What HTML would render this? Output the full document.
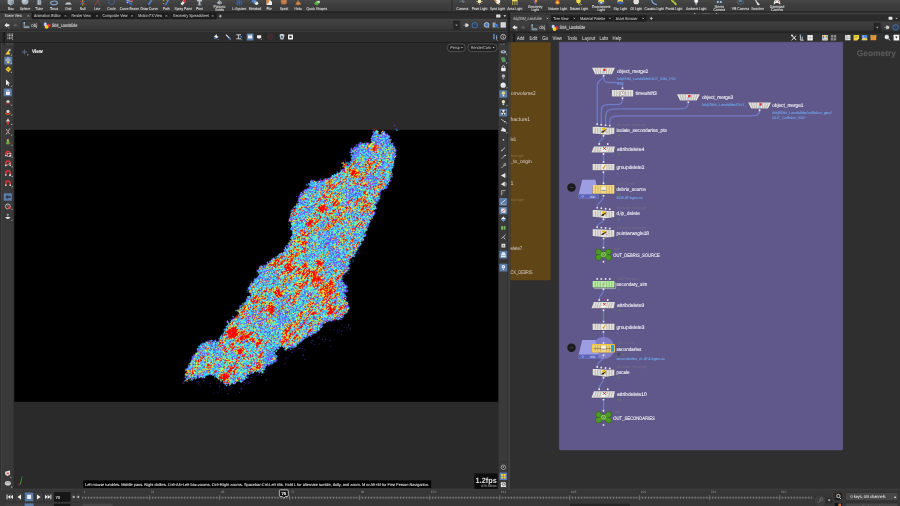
<!DOCTYPE html>
<html lang="en">
<head>
<meta charset="utf-8">
<title>Houdini - SIM_Landslide</title>
<style>
html,body{margin:0;padding:0;background:#2f2f2f;width:900px;height:506px;overflow:hidden}
svg{display:block;will-change:transform;font-family:"Liberation Sans",sans-serif;text-rendering:geometricPrecision}
text{white-space:pre}
</style>
</head>
<body>
<svg width="900" height="506" viewBox="0 0 900 506">
<defs><filter id="soft" x="0" y="0" width="900" height="506" filterUnits="userSpaceOnUse"><feGaussianBlur stdDeviation="0.32"/></filter></defs>
<defs>
<linearGradient id="gShelf" x1="0" y1="0" x2="0" y2="1"><stop offset="0" stop-color="#474747"/><stop offset="0.45" stop-color="#3d3d3d"/><stop offset="1" stop-color="#393939"/></linearGradient>
<linearGradient id="gPath" x1="0" y1="0" x2="0" y2="1"><stop offset="0" stop-color="#4a4a4a"/><stop offset="0.08" stop-color="#424242"/><stop offset="0.8" stop-color="#383838"/><stop offset="0.9" stop-color="#2f2f2f"/><stop offset="1" stop-color="#2e2e2e"/></linearGradient>
<linearGradient id="gPathR" x1="0" y1="0" x2="0" y2="1"><stop offset="0" stop-color="#414141"/><stop offset="0.75" stop-color="#373737"/><stop offset="0.9" stop-color="#303030"/><stop offset="1" stop-color="#2c2c2c"/></linearGradient>
</defs>
<g id="panels">
<rect x="0.00" y="0.00" width="900.00" height="506.00" fill="#2f2f2f"/>
<rect x="0.00" y="0.00" width="900.00" height="11.60" fill="url(#gShelf)"/>
<rect x="0.00" y="11.50" width="900.00" height="1.20" fill="#1e1e1e"/>
<rect x="451.60" y="0.00" width="1.20" height="11.40" fill="#2a2a2a"/>
<rect x="452.80" y="0.00" width="0.60" height="11.40" fill="#4a4a4a"/>
<rect x="0.00" y="12.70" width="508.00" height="6.20" fill="#2c2c2c"/>
<rect x="0.00" y="12.90" width="31.40" height="6.00" fill="#3b3b3b"/>
<rect x="0.00" y="18.80" width="508.00" height="12.60" fill="url(#gPath)"/>
<rect x="0.00" y="31.30" width="508.00" height="0.60" fill="#484848"/>
<rect x="0.00" y="31.90" width="508.00" height="10.20" fill="#2d2d2d"/>
<rect x="0.00" y="42.10" width="508.00" height="0.80" fill="#1c1c1c"/>
<rect x="0.00" y="42.90" width="508.00" height="445.90" fill="#2a2a2a"/>
<rect x="14.40" y="129.90" width="484.00" height="271.90" fill="#000000"/>
<rect x="0.00" y="42.90" width="0.90" height="446.00" fill="#2d2d2d"/>
<rect x="0.90" y="42.90" width="1.00" height="446.00" fill="#474747"/>
<rect x="1.90" y="42.90" width="11.70" height="446.00" fill="#393939"/>
<rect x="498.60" y="42.90" width="8.70" height="446.00" fill="#3a3a3a"/>
<rect x="507.30" y="12.60" width="1.00" height="476.50" fill="#343434"/>
<rect x="508.30" y="12.60" width="1.60" height="476.50" fill="#474747"/>
<rect x="507.60" y="12.60" width="2.60" height="29.60" fill="#222222"/>
<rect x="510.20" y="12.40" width="389.80" height="2.30" fill="#3c3c3c"/>
<rect x="510.20" y="14.60" width="389.80" height="6.90" fill="#2b2b2b"/>
<rect x="510.40" y="14.80" width="40.30" height="6.70" fill="#3b3b3b"/>
<rect x="510.20" y="21.50" width="389.80" height="10.30" fill="url(#gPathR)"/>
<rect x="510.20" y="31.70" width="389.80" height="1.50" fill="#242424"/>
<rect x="510.20" y="33.20" width="389.80" height="9.00" fill="#303030"/>
<rect x="509.90" y="42.20" width="390.10" height="446.60" fill="#2f2f2f"/>
<path d="M693.8 13.0 H695.6 L694.7 14.0 Z" fill="#cfcfcf"/>
<path d="M715.6 13.0 H717.4 L716.5 14.0 Z" fill="#cfcfcf"/>
<rect x="702.20" y="13.00" width="7.80" height="1.00" fill="#555555"/>
<rect x="0.00" y="488.80" width="900.00" height="0.80" fill="#4a4a4a"/>
<rect x="0.00" y="489.60" width="900.00" height="16.40" fill="#373737"/>
</g>
<defs>
<filter id="pcloud" x="-10%" y="-25%" width="120%" height="150%" color-interpolation-filters="sRGB">
 <feTurbulence type="fractalNoise" baseFrequency="0.12 0.42" numOctaves="2" seed="7" result="n1"/>
 <feColorMatrix in="n1" type="matrix" values="1 0 0 0 0  1 0 0 0 0  1 0 0 0 0  0 0 0 0 1" result="g1"/>
 <feTurbulence type="fractalNoise" baseFrequency="0.03 0.06" numOctaves="2" seed="3" result="n2"/>
 <feColorMatrix in="n2" type="matrix" values="0 1 0 0 0  0 1 0 0 0  0 1 0 0 0  0 0 0 0 1" result="g2"/>
 <feTurbulence type="fractalNoise" baseFrequency="0.71 0.83" numOctaves="2" seed="23" result="n3"/>
 <feColorMatrix in="n3" type="matrix" values="0 0 1 0 0  0 0 1 0 0  0 0 1 0 0  0 0 0 0 1" result="g3"/>
 <feGaussianBlur in="SourceGraphic" stdDeviation="2.2" result="hand"/>
 <feComposite in="g1" in2="g2" operator="arithmetic" k1="0" k2="1" k3="0.7" k4="-0.35" result="pa"/>
 <feComposite in="pa" in2="hand" operator="arithmetic" k1="0" k2="1" k3="0.45" k4="-0.225" result="pre"/>
 <feComponentTransfer in="pre" result="s1">
  <feFuncR type="table" tableValues="0 0 0 0 0 0 0 0 0 0.02 0.10 0.28 0.5 0.7 0.85 0.95 1 1 1 1 1"/>
  <feFuncG type="table" tableValues="0 0 0 0 0 0 0 0 0 0.02 0.10 0.28 0.5 0.7 0.85 0.95 1 1 1 1 1"/>
  <feFuncB type="table" tableValues="0 0 0 0 0 0 0 0 0 0.02 0.10 0.28 0.5 0.7 0.85 0.95 1 1 1 1 1"/>
 </feComponentTransfer>
 <feComposite in="g3" in2="hand" operator="arithmetic" k1="0" k2="1.0" k3="0.3" k4="-0.15" result="t"/>
 <feComposite in="s1" in2="t" operator="arithmetic" k1="0" k2="0.62" k3="2.0" k4="-0.70" result="mix"/>
 <feComponentTransfer in="mix" result="col">
  <feFuncR type="table" tableValues="0.52 0.42 0.28 0.22 0.20 0.26 0.23 0.30 0.45 0.78 1.00 1.00 1.00 1.00 1.00 1.00"/>
  <feFuncG type="table" tableValues="0.22 0.30 0.44 0.64 0.84 0.93 0.74 0.92 0.99 1.00 0.88 0.55 0.22 0.03 0.00 0.00"/>
  <feFuncB type="table" tableValues="0.97 1.00 1.00 1.00 1.00 0.93 1.00 0.90 0.65 0.30 0.12 0.04 0.00 0.00 0.00 0.00"/>
 </feComponentTransfer>
 <feTurbulence type="fractalNoise" baseFrequency="0.4" numOctaves="2" seed="11" result="dn"/>
 <feDisplacementMap in="SourceAlpha" in2="dn" scale="6.5" xChannelSelector="R" yChannelSelector="G" result="rough"/>
 <feComposite in="col" in2="rough" operator="in"/>
</filter>
</defs>
<g id="pointcloud">
<g filter="url(#pcloud)" transform="rotate(-50 290 258)">
<g transform="rotate(50 290 258)">
<path d="M374.8 129.8 L377.5 131.8 L379.6 133.4 L382.7 131.2 L385.5 131.6 L388.3 133.2 L389.0 137.4 L390.6 142.1 L394.6 146.1 L396.2 151.6 L394.6 159.5 L393.0 167.4 L391.4 175.3 L389.0 183.2 L384.3 191.1 L381.4 190.0 L379.1 197.9 L375.9 205.8 L375.1 213.7 L371.1 221.6 L366.4 229.5 L364.0 239.0 L358.5 248.5 L353.8 256.4 L349.8 262.7 L349.8 268.0 L348.5 270.0 L342.2 277.9 L340.6 284.2 L343.8 290.6 L346.2 298.5 L349.3 306.4 L346.2 312.7 L342.2 319.0 L334.3 320.6 L328.0 321.4 L323.2 324.5 L320.1 330.1 L315.3 333.2 L310.6 335.6 L305.8 338.0 L301.1 341.9 L296.4 345.9 L291.6 349.1 L290.0 346.9 L287.0 351.6 L283.8 346.9 L277.5 348.5 L274.3 354.0 L271.2 359.5 L268.0 364.3 L264.9 369.0 L261.7 373.8 L258.5 370.6 L253.8 372.2 L249.0 373.8 L245.9 378.5 L241.9 382.5 L239.6 380.9 L234.8 383.2 L229.3 385.1 L224.5 384.0 L220.6 380.9 L215.8 377.7 L211.1 374.5 L203.2 377.7 L195.3 377.7 L187.4 380.9 L182.6 383.4 L185.8 376.9 L185.8 370.6 L189.0 363.5 L192.1 357.2 L196.9 350.8 L200.0 344.5 L207.9 340.6 L214.3 341.3 L219.8 339.0 L223.8 332.6 L225.3 326.3 L228.5 321.9 L233.2 318.0 L239.6 313.2 L237.5 311.0 L240.4 306.9 L244.3 302.2 L249.0 295.8 L247.5 287.9 L252.2 281.6 L260.1 273.7 L264.9 265.8 L271.2 259.5 L277.4 255.9 L284.5 249.6 L286.9 244.8 L290.9 240.1 L292.5 233.8 L290.1 225.8 L289.3 217.9 L292.5 210.8 L296.4 203.7 L298.0 197.4 L301.1 191.9 L307.5 188.7 L315.4 184.7 L320.9 180.0 L325.8 179.3 L332.1 176.1 L338.5 171.4 L344.8 166.6 L349.5 162.7 L351.9 156.4 L353.5 149.2 L357.4 144.5 L362.2 142.9 L368.5 143.7 L371.7 139.0 L373.2 132.6 Z" fill="#808080"/>
<circle cx="352.50" cy="172.50" r="4.00" fill="#f0f0f0"/>
<circle cx="336.00" cy="203.00" r="4.00" fill="#f0f0f0"/>
<circle cx="341.00" cy="196.00" r="3.00" fill="#f0f0f0"/>
<circle cx="322.00" cy="208.50" r="4.00" fill="#f0f0f0"/>
<circle cx="311.00" cy="222.00" r="4.00" fill="#f0f0f0"/>
<circle cx="300.00" cy="239.00" r="3.50" fill="#f0f0f0"/>
<circle cx="304.00" cy="233.00" r="3.00" fill="#f0f0f0"/>
<circle cx="289.00" cy="269.00" r="4.00" fill="#f0f0f0"/>
<circle cx="305.50" cy="272.00" r="6.00" fill="#f0f0f0"/>
<circle cx="316.50" cy="280.00" r="4.00" fill="#f0f0f0"/>
<circle cx="278.00" cy="291.50" r="4.50" fill="#f0f0f0"/>
<circle cx="294.50" cy="300.00" r="5.00" fill="#f0f0f0"/>
<circle cx="330.00" cy="311.00" r="3.50" fill="#f0f0f0"/>
<circle cx="233.60" cy="333.00" r="6.00" fill="#f0f0f0"/>
<circle cx="247.40" cy="335.70" r="5.50" fill="#f0f0f0"/>
<circle cx="261.00" cy="341.00" r="4.00" fill="#f0f0f0"/>
<circle cx="225.00" cy="378.00" r="5.00" fill="#f0f0f0"/>
<circle cx="232.00" cy="371.00" r="3.50" fill="#f0f0f0"/>
<circle cx="289.00" cy="327.00" r="3.50" fill="#f0f0f0"/>
<circle cx="269.50" cy="308.00" r="4.00" fill="#f0f0f0"/>
<circle cx="253.00" cy="286.00" r="3.00" fill="#f0f0f0"/>
<circle cx="345.00" cy="165.00" r="3.00" fill="#f0f0f0"/>
<circle cx="330.00" cy="182.00" r="3.50" fill="#f0f0f0"/>
<circle cx="318.00" cy="262.00" r="4.00" fill="#f0f0f0"/>
<circle cx="240.00" cy="352.00" r="3.00" fill="#f0f0f0"/>
<circle cx="330.00" cy="239.00" r="8.50" fill="#444444"/>
<circle cx="337.00" cy="258.00" r="6.50" fill="#444444"/>
<circle cx="352.00" cy="192.00" r="6.50" fill="#444444"/>
<circle cx="314.00" cy="186.00" r="6.50" fill="#444444"/>
<circle cx="303.00" cy="200.00" r="5.50" fill="#444444"/>
<circle cx="270.00" cy="358.00" r="6.50" fill="#444444"/>
<circle cx="341.00" cy="288.00" r="6.50" fill="#444444"/>
<circle cx="356.00" cy="152.00" r="5.50" fill="#444444"/>
<circle cx="383.00" cy="160.00" r="5.50" fill="#444444"/>
<circle cx="372.00" cy="180.00" r="5.50" fill="#444444"/>
<circle cx="320.00" cy="300.00" r="5.50" fill="#444444"/>
<circle cx="282.00" cy="318.00" r="4.50" fill="#444444"/>
<circle cx="215.00" cy="350.00" r="5.50" fill="#444444"/>
<circle cx="262.00" cy="270.00" r="4.50" fill="#444444"/>
<circle cx="385.00" cy="140.00" r="5.50" fill="#444444"/>
<circle cx="376.00" cy="140.00" r="4.50" fill="#444444"/>
<circle cx="368.00" cy="152.00" r="4.50" fill="#444444"/>
</g></g>
<rect x="396.40" y="129.70" width="1.20" height="1.20" fill="#30c8f0"/>
<rect x="395.60" y="128.60" width="1.20" height="1.20" fill="#4060ff"/>
<rect x="394.00" y="124.90" width="1.20" height="1.20" fill="#7030d0"/>
<rect x="392.90" y="158.40" width="1.20" height="1.20" fill="#6a30d0"/>
<rect x="235.40" y="310.00" width="1.20" height="1.20" fill="#30c0f0"/>
<rect x="291.93" y="351.63" width="0.90" height="0.90" fill="#6a22d0" opacity="0.94"/>
<rect x="341.14" y="334.05" width="0.90" height="0.90" fill="#7a28c8" opacity="0.52"/>
<rect x="309.94" y="341.82" width="0.90" height="0.90" fill="#6a22d0" opacity="0.70"/>
<rect x="267.71" y="365.81" width="0.90" height="0.90" fill="#7a28c8" opacity="0.92"/>
<rect x="341.28" y="330.95" width="0.90" height="0.90" fill="#6a22d0" opacity="0.70"/>
<rect x="213.43" y="392.53" width="0.90" height="0.90" fill="#7a28c8" opacity="0.46"/>
<rect x="268.24" y="364.98" width="0.90" height="0.90" fill="#4a40e0" opacity="0.95"/>
<rect x="284.39" y="362.97" width="0.90" height="0.90" fill="#5a30d8" opacity="0.91"/>
<rect x="198.02" y="380.37" width="0.90" height="0.90" fill="#4a40e0" opacity="0.52"/>
<rect x="337.12" y="330.34" width="0.90" height="0.90" fill="#4a40e0" opacity="0.77"/>
<rect x="313.92" y="344.11" width="0.90" height="0.90" fill="#6a22d0" opacity="0.74"/>
<rect x="217.37" y="391.88" width="0.90" height="0.90" fill="#7a28c8" opacity="0.65"/>
<rect x="291.09" y="351.82" width="0.90" height="0.90" fill="#6a22d0" opacity="0.71"/>
<rect x="330.20" y="329.65" width="0.90" height="0.90" fill="#6a22d0" opacity="0.56"/>
<rect x="228.26" y="388.48" width="0.90" height="0.90" fill="#5a30d8" opacity="0.59"/>
<rect x="330.35" y="345.96" width="0.90" height="0.90" fill="#6a22d0" opacity="0.52"/>
<rect x="240.55" y="388.13" width="0.90" height="0.90" fill="#6a22d0" opacity="0.73"/>
<rect x="300.39" y="347.58" width="0.90" height="0.90" fill="#4a40e0" opacity="0.94"/>
<rect x="227.54" y="393.24" width="0.90" height="0.90" fill="#4a40e0" opacity="0.88"/>
<rect x="344.85" y="324.66" width="0.90" height="0.90" fill="#5a30d8" opacity="0.50"/>
<rect x="333.64" y="329.21" width="0.90" height="0.90" fill="#7a28c8" opacity="0.51"/>
<rect x="221.56" y="389.02" width="0.90" height="0.90" fill="#6a22d0" opacity="0.45"/>
<rect x="218.44" y="387.70" width="0.90" height="0.90" fill="#5a30d8" opacity="0.63"/>
<rect x="288.88" y="354.87" width="0.90" height="0.90" fill="#6a22d0" opacity="0.46"/>
<rect x="196.52" y="381.48" width="0.90" height="0.90" fill="#4a40e0" opacity="0.93"/>
<rect x="243.73" y="383.93" width="0.90" height="0.90" fill="#6a22d0" opacity="0.48"/>
<rect x="322.05" y="339.06" width="0.90" height="0.90" fill="#5a30d8" opacity="0.55"/>
<rect x="270.11" y="364.37" width="0.90" height="0.90" fill="#4a40e0" opacity="0.46"/>
<rect x="304.52" y="358.79" width="0.90" height="0.90" fill="#6a22d0" opacity="0.93"/>
<rect x="199.52" y="385.35" width="0.90" height="0.90" fill="#4a40e0" opacity="0.70"/>
<rect x="311.47" y="340.34" width="0.90" height="0.90" fill="#6a22d0" opacity="0.53"/>
<rect x="317.31" y="337.43" width="0.90" height="0.90" fill="#4a40e0" opacity="0.88"/>
<rect x="252.39" y="374.73" width="0.90" height="0.90" fill="#6a22d0" opacity="0.56"/>
<rect x="203.20" y="380.68" width="0.90" height="0.90" fill="#4a40e0" opacity="0.83"/>
<rect x="223.86" y="387.83" width="0.90" height="0.90" fill="#4a40e0" opacity="0.86"/>
<rect x="312.38" y="340.29" width="0.90" height="0.90" fill="#4a40e0" opacity="0.91"/>
<rect x="339.17" y="329.61" width="0.90" height="0.90" fill="#4a40e0" opacity="0.46"/>
<rect x="250.64" y="376.99" width="0.90" height="0.90" fill="#5a30d8" opacity="0.90"/>
<rect x="276.80" y="360.31" width="0.90" height="0.90" fill="#5a30d8" opacity="0.60"/>
<rect x="311.25" y="342.64" width="0.90" height="0.90" fill="#5a30d8" opacity="0.66"/>
<rect x="318.77" y="336.72" width="0.90" height="0.90" fill="#6a22d0" opacity="0.95"/>
<rect x="341.65" y="324.36" width="0.90" height="0.90" fill="#5a30d8" opacity="0.65"/>
<rect x="210.04" y="385.98" width="0.90" height="0.90" fill="#5a30d8" opacity="0.59"/>
<rect x="337.39" y="332.38" width="0.90" height="0.90" fill="#4a40e0" opacity="0.63"/>
<rect x="248.35" y="383.05" width="0.90" height="0.90" fill="#6a22d0" opacity="0.78"/>
<rect x="244.12" y="382.26" width="0.90" height="0.90" fill="#6a22d0" opacity="0.83"/>
<rect x="244.79" y="379.49" width="0.90" height="0.90" fill="#4a40e0" opacity="0.49"/>
<rect x="218.93" y="385.30" width="0.90" height="0.90" fill="#4a40e0" opacity="0.47"/>
<rect x="302.13" y="348.39" width="0.90" height="0.90" fill="#4a40e0" opacity="0.89"/>
<rect x="203.48" y="380.42" width="0.90" height="0.90" fill="#5a30d8" opacity="0.77"/>
<rect x="347.95" y="325.61" width="0.90" height="0.90" fill="#4a40e0" opacity="0.93"/>
<rect x="232.55" y="386.80" width="0.90" height="0.90" fill="#4a40e0" opacity="0.52"/>
<rect x="287.47" y="356.72" width="0.90" height="0.90" fill="#5a30d8" opacity="0.49"/>
<rect x="260.95" y="374.92" width="0.90" height="0.90" fill="#7a28c8" opacity="0.92"/>
<rect x="204.58" y="381.88" width="0.90" height="0.90" fill="#6a22d0" opacity="0.46"/>
<rect x="272.01" y="363.41" width="0.90" height="0.90" fill="#4a40e0" opacity="0.49"/>
<rect x="325.12" y="338.82" width="0.90" height="0.90" fill="#5a30d8" opacity="0.83"/>
<rect x="342.27" y="329.87" width="0.90" height="0.90" fill="#7a28c8" opacity="0.62"/>
<rect x="293.08" y="351.09" width="0.90" height="0.90" fill="#5a30d8" opacity="0.53"/>
<rect x="262.92" y="370.67" width="0.90" height="0.90" fill="#6a22d0" opacity="0.59"/>
<rect x="218.98" y="385.95" width="0.90" height="0.90" fill="#6a22d0" opacity="0.77"/>
<rect x="265.79" y="370.40" width="0.90" height="0.90" fill="#7a28c8" opacity="0.60"/>
<rect x="349.89" y="328.38" width="0.90" height="0.90" fill="#4a40e0" opacity="0.72"/>
<rect x="265.85" y="379.33" width="0.90" height="0.90" fill="#4a40e0" opacity="0.93"/>
<rect x="271.18" y="364.00" width="0.90" height="0.90" fill="#5a30d8" opacity="0.93"/>
<rect x="240.82" y="387.52" width="0.90" height="0.90" fill="#5a30d8" opacity="0.58"/>
<rect x="258.18" y="374.19" width="0.90" height="0.90" fill="#6a22d0" opacity="0.82"/>
<rect x="348.21" y="324.13" width="0.90" height="0.90" fill="#5a30d8" opacity="0.57"/>
<rect x="343.81" y="326.83" width="0.90" height="0.90" fill="#6a22d0" opacity="0.45"/>
<rect x="248.13" y="381.54" width="0.90" height="0.90" fill="#5a30d8" opacity="0.66"/>
<rect x="209.73" y="382.93" width="0.90" height="0.90" fill="#5a30d8" opacity="0.85"/>
<rect x="329.58" y="340.10" width="0.90" height="0.90" fill="#6a22d0" opacity="0.85"/>
<rect x="251.64" y="376.77" width="0.90" height="0.90" fill="#5a30d8" opacity="0.47"/>
<rect x="302.97" y="354.47" width="0.90" height="0.90" fill="#4a40e0" opacity="0.89"/>
<rect x="298.26" y="347.76" width="0.90" height="0.90" fill="#6a22d0" opacity="0.73"/>
<rect x="304.49" y="349.22" width="0.90" height="0.90" fill="#4a40e0" opacity="0.68"/>
<rect x="239.25" y="391.88" width="0.90" height="0.90" fill="#6a22d0" opacity="0.91"/>
<rect x="302.40" y="345.61" width="0.90" height="0.90" fill="#7a28c8" opacity="0.73"/>
<rect x="241.25" y="388.66" width="0.90" height="0.90" fill="#7a28c8" opacity="0.81"/>
<rect x="285.42" y="357.77" width="0.90" height="0.90" fill="#4a40e0" opacity="0.94"/>
<rect x="197.78" y="383.68" width="0.90" height="0.90" fill="#7a28c8" opacity="0.87"/>
<rect x="299.43" y="348.06" width="0.90" height="0.90" fill="#6a22d0" opacity="0.77"/>
<rect x="267.29" y="368.89" width="0.90" height="0.90" fill="#6a22d0" opacity="0.82"/>
<rect x="318.83" y="343.56" width="0.90" height="0.90" fill="#4a40e0" opacity="0.50"/>
<rect x="249.57" y="381.71" width="0.90" height="0.90" fill="#7a28c8" opacity="0.86"/>
<rect x="323.54" y="340.77" width="0.90" height="0.90" fill="#7a28c8" opacity="0.86"/>
<rect x="249.91" y="382.13" width="0.90" height="0.90" fill="#5a30d8" opacity="0.68"/>
<rect x="302.00" y="355.01" width="0.90" height="0.90" fill="#6a22d0" opacity="0.70"/>
<rect x="346.32" y="327.50" width="0.90" height="0.90" fill="#5a30d8" opacity="0.73"/>
<rect x="277.52" y="361.40" width="0.90" height="0.90" fill="#6a22d0" opacity="0.48"/>
</g>
<g id="net" filter="url(#soft)">
<g id="netboxes">
<path d="M510.4 42.2 H550.6 V278.7 Q550.6 280.2 549.1 280.2 H510.4 Z" fill="#604419"/>
<path d="M559.3 42.2 H842.8 V448.4 Q842.8 449.9 841.3 449.9 H560.8 Q559.3 449.9 559.3 448.4 Z" fill="#60588a" stroke="#6b63a0" stroke-width="0.4"/>
</g>
<g id="brown-labels">
<text x="511.00" y="94.60" font-size="5.3" fill="#d2cbbd" stroke="#d2cbbd" stroke-width="0.03" textLength="24.60" lengthAdjust="spacingAndGlyphs">omvolume2</text>
<text x="510.60" y="121.00" font-size="5.3" fill="#d2cbbd" stroke="#d2cbbd" stroke-width="0.03" textLength="19.50" lengthAdjust="spacingAndGlyphs">fracture1</text>
<text x="510.60" y="141.20" font-size="5.3" fill="#d2cbbd" stroke="#d2cbbd" stroke-width="0.03" textLength="5.60" lengthAdjust="spacingAndGlyphs">le1</text>
<text x="510.80" y="156.80" font-size="3.9" fill="#8a6e40" stroke="#8a6e40" stroke-width="0.03" textLength="13.50" lengthAdjust="spacingAndGlyphs">triangle</text>
<text x="510.60" y="162.60" font-size="5.3" fill="#d2cbbd" stroke="#d2cbbd" stroke-width="0.03" textLength="21.00" lengthAdjust="spacingAndGlyphs">_to_origin</text>
<text x="510.60" y="185.00" font-size="5.3" fill="#d2cbbd" stroke="#d2cbbd" stroke-width="0.03">1</text>
<text x="510.80" y="201.20" font-size="3.9" fill="#8a6e40" stroke="#8a6e40" stroke-width="0.03" textLength="13.50" lengthAdjust="spacingAndGlyphs">triangle</text>
<text x="510.60" y="223.00" font-size="5.3" fill="#8a6e40" stroke="#8a6e40" stroke-width="0.03">.</text>
<text x="510.60" y="250.00" font-size="5.3" fill="#d2cbbd" stroke="#d2cbbd" stroke-width="0.03" textLength="11.60" lengthAdjust="spacingAndGlyphs">elete7</text>
<text x="510.60" y="273.60" font-size="5.3" fill="#d2cbbd" stroke="#d2cbbd" stroke-width="0.03" textLength="22.00" lengthAdjust="spacingAndGlyphs">CK_DEBRIS</text>
</g>
<g id="wires" fill="none" stroke="#707ac6" stroke-width="1.25" stroke-linecap="round">
<path d="M603.6 76 C603.6 80.5 597.3 79 597.3 85 V124.2"/>
<path d="M603.6 76 C603.6 82.6 606 82.6 611 82.6 H618 C622.5 82.6 622.5 84 622.5 87.6"/>
<path d="M622.5 98.6 C622.5 104.6 620 104.6 615 104.6 H608 C601.3 104.6 601.3 108 601.3 113 V124.2"/>
<path d="M688.3 102.3 C688.3 108.8 684 108.8 679 108.8 H616 C605.6 108.8 605.6 113 605.6 118 V124.2"/>
<path d="M759.6 110.3 C759.6 115.9 755 115.9 750 115.9 H620 C609.8 115.9 609.8 119 609.8 122 V124.2"/>
<path d="M603.5 136 C603.5 141.3 599.2 138.3 599.2 143.6"/>
<path d="M603.5 154.2 V161.6"/>
<path d="M603.5 172.4 V183.0"/>
<path d="M603.5 195.8 C603.5 203.2 597.2 200.2 597.2 207.6"/>
<path d="M603.5 219.5 C603.5 224.75 597.2 221.75 597.2 227.0"/>
<path d="M603.5 238.8 V247.4"/>
<path d="M603.5 289.5 C603.5 296.05 599.2 293.05 599.2 299.6"/>
<path d="M603.5 310.4 V321.4"/>
<path d="M603.5 332.0 V342.8"/>
<path d="M603.5 355.5 C603.5 362.75 597.2 359.75 597.2 367.0"/>
<path d="M603.5 377.8 C603.5 384.85 599.2 381.85 599.2 388.9"/>
<path d="M603.5 399.8 V410.6"/>
</g>
<g id="nodes">
<path d="M592.05 68.2 H614.95 L612.1500000000001 74.7 H594.8499999999999 Z" fill="#4a4370"/>
<path d="M592.05 67.8 H614.95 L611.95 74.2 H595.05 Z" fill="#e4e2da"/>
<line x1="600.30" y1="68.20" x2="600.50" y2="73.80" stroke="#a4a4aa" stroke-width="0.7"/>
<line x1="606.70" y1="68.20" x2="606.50" y2="73.80" stroke="#a4a4aa" stroke-width="0.7"/>
<line x1="597.60" y1="68.20" x2="598.60" y2="73.80" stroke="#a4a4aa" stroke-width="0.7"/>
<line x1="609.40" y1="68.20" x2="608.40" y2="73.80" stroke="#a4a4aa" stroke-width="0.7"/>
<line x1="594.90" y1="68.20" x2="596.70" y2="73.80" stroke="#a4a4aa" stroke-width="0.7"/>
<line x1="612.10" y1="68.20" x2="610.30" y2="73.80" stroke="#a4a4aa" stroke-width="0.7"/>
<rect x="602.10" y="70.90" width="2.60" height="2.60" fill="#a8c4dc"/>
<rect x="603.30" y="68.70" width="2.30" height="2.30" fill="#d42a2a"/>
<circle cx="603.60" cy="75.80" r="0.95" fill="#e6e6ee"/>
<text x="617.00" y="72.80" font-size="5.15" fill="#f4f4f8" stroke="#f4f4f8" stroke-width="0.1" textLength="31.20" lengthAdjust="spacingAndGlyphs">object_merge2</text>
<text x="617.00" y="80.00" font-size="3.7" fill="#6fa4ea" stroke="#6fa4ea" stroke-width="0.1" textLength="58.50" lengthAdjust="spacingAndGlyphs">/obj/SIM_Landslide/OUT_SIM_POI</text>
<text x="617.00" y="84.80" font-size="3.7" fill="#6fa4ea" stroke="#6fa4ea" stroke-width="0.1" textLength="6.60" lengthAdjust="spacingAndGlyphs">NTS</text>
<circle cx="622.50" cy="88.20" r="0.95" fill="#e6e6ee"/>
<rect x="611.75" y="90.50" width="21.60" height="6.40" fill="#4a4370" rx="0.6"/>
<rect x="611.90" y="90.10" width="21.30" height="6.40" fill="#e4e2da" rx="0.6"/>
<line x1="619.35" y1="90.50" x2="619.35" y2="96.10" stroke="#a4a4aa" stroke-width="0.7"/>
<line x1="625.75" y1="90.50" x2="625.75" y2="96.10" stroke="#a4a4aa" stroke-width="0.7"/>
<line x1="616.85" y1="90.50" x2="616.85" y2="96.10" stroke="#a4a4aa" stroke-width="0.7"/>
<line x1="628.25" y1="90.50" x2="628.25" y2="96.10" stroke="#a4a4aa" stroke-width="0.7"/>
<line x1="614.35" y1="90.50" x2="614.35" y2="96.10" stroke="#a4a4aa" stroke-width="0.7"/>
<line x1="630.75" y1="90.50" x2="630.75" y2="96.10" stroke="#a4a4aa" stroke-width="0.7"/>
<circle cx="622.50" cy="93.30" r="2.30" fill="#f4f4f4" stroke="#777" stroke-width="0.5"/>
<path d="M622.5 93.3 V91.7 M622.5 93.3 H623.7" fill="none" stroke="#c03030" stroke-width="0.5"/>
<circle cx="622.50" cy="98.30" r="0.95" fill="#e6e6ee"/>
<text x="635.60" y="94.90" font-size="5.15" fill="#f4f4f8" stroke="#f4f4f8" stroke-width="0.1" textLength="21.20" lengthAdjust="spacingAndGlyphs">timeshift3</text>
<path d="M676.9499999999999 94.60000000000001 H699.85 L697.0500000000001 100.9 H679.7499999999999 Z" fill="#4a4370"/>
<path d="M676.9499999999999 94.2 H699.85 L696.85 100.4 H679.9499999999999 Z" fill="#e4e2da"/>
<line x1="685.20" y1="94.60" x2="685.40" y2="100.00" stroke="#a4a4aa" stroke-width="0.7"/>
<line x1="691.60" y1="94.60" x2="691.40" y2="100.00" stroke="#a4a4aa" stroke-width="0.7"/>
<line x1="682.50" y1="94.60" x2="683.50" y2="100.00" stroke="#a4a4aa" stroke-width="0.7"/>
<line x1="694.30" y1="94.60" x2="693.30" y2="100.00" stroke="#a4a4aa" stroke-width="0.7"/>
<line x1="679.80" y1="94.60" x2="681.60" y2="100.00" stroke="#a4a4aa" stroke-width="0.7"/>
<line x1="697.00" y1="94.60" x2="695.20" y2="100.00" stroke="#a4a4aa" stroke-width="0.7"/>
<rect x="687.00" y="97.20" width="2.60" height="2.60" fill="#a8c4dc"/>
<rect x="688.20" y="95.00" width="2.30" height="2.30" fill="#d42a2a"/>
<circle cx="688.30" cy="102.10" r="0.95" fill="#e6e6ee"/>
<text x="702.00" y="99.00" font-size="5.15" fill="#f4f4f8" stroke="#f4f4f8" stroke-width="0.1" textLength="31.20" lengthAdjust="spacingAndGlyphs">object_merge3</text>
<text x="702.00" y="105.70" font-size="3.7" fill="#6fa4ea" stroke="#6fa4ea" stroke-width="0.1" textLength="45.00" lengthAdjust="spacingAndGlyphs">/obj/SIM_Landslide/OUT_</text>
<path d="M748.15 102.80000000000001 H771.0500000000001 L768.2500000000001 109.1 H750.9499999999999 Z" fill="#4a4370"/>
<path d="M748.15 102.4 H771.0500000000001 L768.0500000000001 108.6 H751.15 Z" fill="#e4e2da"/>
<line x1="756.40" y1="102.80" x2="756.60" y2="108.20" stroke="#a4a4aa" stroke-width="0.7"/>
<line x1="762.80" y1="102.80" x2="762.60" y2="108.20" stroke="#a4a4aa" stroke-width="0.7"/>
<line x1="753.70" y1="102.80" x2="754.70" y2="108.20" stroke="#a4a4aa" stroke-width="0.7"/>
<line x1="765.50" y1="102.80" x2="764.50" y2="108.20" stroke="#a4a4aa" stroke-width="0.7"/>
<line x1="751.00" y1="102.80" x2="752.80" y2="108.20" stroke="#a4a4aa" stroke-width="0.7"/>
<line x1="768.20" y1="102.80" x2="766.40" y2="108.20" stroke="#a4a4aa" stroke-width="0.7"/>
<rect x="758.20" y="105.40" width="2.60" height="2.60" fill="#a8c4dc"/>
<rect x="759.40" y="103.20" width="2.30" height="2.30" fill="#d42a2a"/>
<circle cx="759.60" cy="110.20" r="0.95" fill="#e6e6ee"/>
<text x="772.20" y="107.30" font-size="5.15" fill="#f4f4f8" stroke="#f4f4f8" stroke-width="0.1" textLength="31.20" lengthAdjust="spacingAndGlyphs">object_merge1</text>
<text x="772.20" y="114.20" font-size="3.7" fill="#6fa4ea" stroke="#6fa4ea" stroke-width="0.1" textLength="59.50" lengthAdjust="spacingAndGlyphs">/obj/SIM_Landslide/collision_geo/</text>
<text x="772.20" y="119.30" font-size="3.7" fill="#6fa4ea" stroke="#6fa4ea" stroke-width="0.1" textLength="33.60" lengthAdjust="spacingAndGlyphs">OUT_Collision_SDF</text>
<circle cx="597.20" cy="124.25" r="0.95" fill="#e6e6ee"/>
<circle cx="601.30" cy="124.70" r="0.95" fill="#e6e6ee"/>
<circle cx="605.60" cy="125.15" r="0.95" fill="#e6e6ee"/>
<circle cx="609.80" cy="125.60" r="0.95" fill="#e6e6ee"/>
<path d="M592.7 127.35000000000001 Q600.5 127.15 603.5 127.75 T614.3 128.15 V134.14999999999998 Q607.5 135.54999999999998 603.5 135.04999999999998 Q598.5 134.45 592.7 133.85 Z" fill="#4a4370"/>
<path d="M592.7 126.9 Q600.5 126.7 603.5 127.3 T614.3 127.7 V133.7 Q607.5 135.1 603.5 134.6 Q598.5 134.0 592.7 133.4 Z" fill="#e4e2da"/>
<line x1="600.30" y1="127.90" x2="600.30" y2="133.80" stroke="#a4a4aa" stroke-width="0.7"/>
<line x1="606.70" y1="127.90" x2="606.70" y2="133.80" stroke="#a4a4aa" stroke-width="0.7"/>
<line x1="597.80" y1="127.90" x2="597.80" y2="133.80" stroke="#a4a4aa" stroke-width="0.7"/>
<line x1="609.20" y1="127.90" x2="609.20" y2="133.80" stroke="#a4a4aa" stroke-width="0.7"/>
<line x1="595.30" y1="127.90" x2="595.30" y2="133.80" stroke="#a4a4aa" stroke-width="0.7"/>
<line x1="611.70" y1="127.90" x2="611.70" y2="133.80" stroke="#a4a4aa" stroke-width="0.7"/>
<path d="M600.9 132.3 L605.1 128.8 L606.3 129.8 L603.1 132.70000000000002 Z" fill="#2c2a1c"/>
<path d="M601.7 128.5 L604.7 128.1 L606.1 129.4 L603.3 130.8 Z" fill="#e9bb08"/>
<circle cx="605.40" cy="131.30" r="0.80" fill="#e9bb08"/>
<circle cx="603.50" cy="135.80" r="0.95" fill="#e6e6ee"/>
<text x="616.70" y="125.70" font-size="3.8" fill="#736f8b" stroke="#736f8b" stroke-width="0.02" textLength="30.00" lengthAdjust="spacingAndGlyphs">Attribute Wrangle</text>
<text x="616.40" y="131.90" font-size="5.15" fill="#f4f4f8" stroke="#f4f4f8" stroke-width="0.1" textLength="50.40" lengthAdjust="spacingAndGlyphs">isolate_secondaries_pts</text>
<rect x="617.90" y="135.00" width="1.80" height="1.60" fill="#5f7a58" rx="0.3"/>
<path d="M618.3 135.0 V134.5 Q618.8 133.7 619.3 134.5 V135.0" fill="none" stroke="#5f7a58" stroke-width="0.4"/>
<circle cx="599.20" cy="144.00" r="0.95" fill="#e6e6ee"/>
<circle cx="607.80" cy="144.00" r="0.95" fill="#e6e6ee"/>
<path d="M593.9000000000001 146.8 H614.9 L613.6999999999999 152.9 H591.5 Z" fill="#4a4370"/>
<path d="M593.9000000000001 146.4 H614.9 L613.6999999999999 152.4 H591.5 Z" fill="#e4e2da"/>
<line x1="601.10" y1="146.80" x2="599.50" y2="152.00" stroke="#a4a4aa" stroke-width="0.7"/>
<line x1="607.50" y1="146.80" x2="605.90" y2="152.00" stroke="#a4a4aa" stroke-width="0.7"/>
<line x1="598.60" y1="146.80" x2="597.00" y2="152.00" stroke="#a4a4aa" stroke-width="0.7"/>
<line x1="610.00" y1="146.80" x2="608.40" y2="152.00" stroke="#a4a4aa" stroke-width="0.7"/>
<line x1="596.10" y1="146.80" x2="594.50" y2="152.00" stroke="#a4a4aa" stroke-width="0.7"/>
<line x1="612.50" y1="146.80" x2="610.90" y2="152.00" stroke="#a4a4aa" stroke-width="0.7"/>
<rect x="601.70" y="147.70" width="4.80" height="3.60" fill="#f4f4f4"/>
<path d="M603.2 147.20000000000002 L605.7 149.70000000000002 M605.7 147.20000000000002 L603.2 149.70000000000002" fill="none" stroke="#e02020" stroke-width="1.0"/>
<circle cx="603.50" cy="154.00" r="0.95" fill="#e6e6ee"/>
<text x="617.00" y="150.90" font-size="5.15" fill="#f4f4f8" stroke="#f4f4f8" stroke-width="0.1" textLength="27.20" lengthAdjust="spacingAndGlyphs">attribdelete4</text>
<rect x="618.40" y="153.70" width="1.80" height="1.60" fill="#5f7a58" rx="0.3"/>
<path d="M618.8 153.70000000000002 V153.20000000000002 Q619.3 152.4 619.8 153.20000000000002 V153.70000000000002" fill="none" stroke="#5f7a58" stroke-width="0.4"/>
<circle cx="603.50" cy="161.90" r="0.95" fill="#e6e6ee"/>
<rect x="592.45" y="164.40" width="22.10" height="6.30" fill="#4a4370" rx="0.6"/>
<rect x="592.60" y="164.00" width="21.80" height="6.30" fill="#e4e2da" rx="0.6"/>
<line x1="600.30" y1="164.40" x2="600.30" y2="169.90" stroke="#a4a4aa" stroke-width="0.7"/>
<line x1="606.70" y1="164.40" x2="606.70" y2="169.90" stroke="#a4a4aa" stroke-width="0.7"/>
<line x1="597.80" y1="164.40" x2="597.80" y2="169.90" stroke="#a4a4aa" stroke-width="0.7"/>
<line x1="609.20" y1="164.40" x2="609.20" y2="169.90" stroke="#a4a4aa" stroke-width="0.7"/>
<line x1="595.30" y1="164.40" x2="595.30" y2="169.90" stroke="#a4a4aa" stroke-width="0.7"/>
<line x1="611.70" y1="164.40" x2="611.70" y2="169.90" stroke="#a4a4aa" stroke-width="0.7"/>
<rect x="601.50" y="165.40" width="4.80" height="3.60" fill="#f4f0e6"/>
<path d="M602.9 168.6 L605.5 165.39999999999998" fill="none" stroke="#e8a020" stroke-width="1.1"/>
<path d="M602.5 167.6 L604.1 168.79999999999998" fill="none" stroke="#b06a10" stroke-width="0.6"/>
<circle cx="603.50" cy="172.20" r="0.95" fill="#e6e6ee"/>
<text x="616.40" y="168.80" font-size="5.15" fill="#f4f4f8" stroke="#f4f4f8" stroke-width="0.1" textLength="28.00" lengthAdjust="spacingAndGlyphs">groupdelete2</text>
<line x1="616.60" y1="173.40" x2="617.80" y2="173.40" stroke="#7a9ad8" stroke-width="0.5"/>
<path d="M582.2 179.8 H595.4 L598.4 194.20000000000002 V198.60000000000002 H578.7 V194.20000000000002 Z" fill="#9d9de4"/>
<path d="M578.7 194.20000000000002 H598.4 V197.8 Q598.4 198.60000000000002 597.6 198.60000000000002 H579.5 Q578.7 198.60000000000002 578.7 197.8 Z" fill="#5a63b6"/>
<circle cx="582.60" cy="196.40" r="0.90" fill="none" stroke="#c8ccf4" stroke-width="0.45"/>
<text x="589.80" y="197.60" font-size="3.2" fill="#c8ccf4" stroke="#c8ccf4" stroke-width="0.1" textLength="5.60" lengthAdjust="spacingAndGlyphs">000</text>
<circle cx="571.50" cy="187.60" r="4.25" fill="#1b1b1e"/>
<line x1="570.00" y1="187.60" x2="573.00" y2="187.60" stroke="#66666a" stroke-width="0.6"/>
<circle cx="603.50" cy="183.20" r="0.95" fill="#e6e6ee"/>
<rect x="592.45" y="185.30" width="22.10" height="8.90" fill="#4a4370" rx="0.6"/>
<rect x="592.60" y="184.90" width="21.80" height="8.90" fill="#f1d78a" rx="0.6"/>
<line x1="600.30" y1="185.30" x2="600.30" y2="193.40" stroke="#c8a850" stroke-width="0.7"/>
<line x1="606.70" y1="185.30" x2="606.70" y2="193.40" stroke="#c8a850" stroke-width="0.7"/>
<line x1="597.80" y1="185.30" x2="597.80" y2="193.40" stroke="#c8a850" stroke-width="0.7"/>
<line x1="609.20" y1="185.30" x2="609.20" y2="193.40" stroke="#c8a850" stroke-width="0.7"/>
<line x1="595.30" y1="185.30" x2="595.30" y2="193.40" stroke="#c8a850" stroke-width="0.7"/>
<line x1="611.70" y1="185.30" x2="611.70" y2="193.40" stroke="#c8a850" stroke-width="0.7"/>
<rect x="601.40" y="187.50" width="4.20" height="3.30" fill="#f7f7f7" rx="0.3"/>
<rect x="601.40" y="189.80" width="4.20" height="1.00" fill="#8a8a90"/>
<circle cx="603.50" cy="195.60" r="0.95" fill="#e6e6ee"/>
<text x="616.70" y="184.70" font-size="3.8" fill="#736f8b" stroke="#736f8b" stroke-width="0.02" textLength="17.50" lengthAdjust="spacingAndGlyphs">File Cache</text>
<text x="616.40" y="190.90" font-size="5.15" fill="#f4f4f8" stroke="#f4f4f8" stroke-width="0.1" textLength="29.40" lengthAdjust="spacingAndGlyphs">debris_source</text>
<rect x="617.90" y="193.90" width="1.80" height="1.60" fill="#5f7a58" rx="0.3"/>
<path d="M618.3 193.9 V193.4 Q618.8 192.6 619.3 193.4 V193.9" fill="none" stroke="#5f7a58" stroke-width="0.4"/>
<text x="616.60" y="199.20" font-size="3.7" fill="#6fa4ea" stroke="#6fa4ea" stroke-width="0.1" textLength="26.00" lengthAdjust="spacingAndGlyphs">$OS.$F.bgeo.sc</text>
<circle cx="597.20" cy="207.85" r="0.95" fill="#e6e6ee"/>
<circle cx="601.30" cy="208.30" r="0.95" fill="#e6e6ee"/>
<circle cx="605.60" cy="208.75" r="0.95" fill="#e6e6ee"/>
<circle cx="609.80" cy="209.20" r="0.95" fill="#e6e6ee"/>
<path d="M592.7 210.54999999999998 Q600.5 210.35 603.5 210.95 T614.3 211.35 V217.54999999999998 Q607.5 218.95 603.5 218.45 Q598.5 217.85 592.7 217.25 Z" fill="#4a4370"/>
<path d="M592.7 210.1 Q600.5 209.9 603.5 210.5 T614.3 210.9 V217.1 Q607.5 218.5 603.5 218.0 Q598.5 217.4 592.7 216.8 Z" fill="#e4e2da"/>
<line x1="600.30" y1="211.10" x2="600.30" y2="217.20" stroke="#a4a4aa" stroke-width="0.7"/>
<line x1="606.70" y1="211.10" x2="606.70" y2="217.20" stroke="#a4a4aa" stroke-width="0.7"/>
<line x1="597.80" y1="211.10" x2="597.80" y2="217.20" stroke="#a4a4aa" stroke-width="0.7"/>
<line x1="609.20" y1="211.10" x2="609.20" y2="217.20" stroke="#a4a4aa" stroke-width="0.7"/>
<line x1="595.30" y1="211.10" x2="595.30" y2="217.20" stroke="#a4a4aa" stroke-width="0.7"/>
<line x1="611.70" y1="211.10" x2="611.70" y2="217.20" stroke="#a4a4aa" stroke-width="0.7"/>
<path d="M600.9 215.5 L605.1 212.0 L606.3 213.0 L603.1 215.9 Z" fill="#2c2a1c"/>
<path d="M601.7 211.7 L604.7 211.29999999999998 L606.1 212.6 L603.3 214.0 Z" fill="#e9bb08"/>
<circle cx="605.40" cy="214.50" r="0.80" fill="#e9bb08"/>
<circle cx="603.50" cy="219.30" r="0.95" fill="#e6e6ee"/>
<text x="616.70" y="209.20" font-size="3.8" fill="#736f8b" stroke="#736f8b" stroke-width="0.02" textLength="30.00" lengthAdjust="spacingAndGlyphs">Attribute Wrangle</text>
<text x="616.40" y="215.40" font-size="5.15" fill="#f4f4f8" stroke="#f4f4f8" stroke-width="0.1" textLength="23.40" lengthAdjust="spacingAndGlyphs">d,lp_delete</text>
<rect x="617.90" y="218.50" width="1.80" height="1.60" fill="#5f7a58" rx="0.3"/>
<path d="M618.3 218.5 V218.0 Q618.8 217.2 619.3 218.0 V218.5" fill="none" stroke="#5f7a58" stroke-width="0.4"/>
<circle cx="597.20" cy="227.15" r="0.95" fill="#e6e6ee"/>
<circle cx="601.30" cy="227.60" r="0.95" fill="#e6e6ee"/>
<circle cx="605.60" cy="228.05" r="0.95" fill="#e6e6ee"/>
<circle cx="609.80" cy="228.50" r="0.95" fill="#e6e6ee"/>
<path d="M592.7 229.64999999999998 Q600.5 229.45 603.5 230.04999999999998 T614.3 230.45 V236.85 Q607.5 238.25 603.5 237.75 Q598.5 237.15 592.7 236.55 Z" fill="#4a4370"/>
<path d="M592.7 229.2 Q600.5 229.0 603.5 229.6 T614.3 230.0 V236.4 Q607.5 237.8 603.5 237.3 Q598.5 236.70000000000002 592.7 236.10000000000002 Z" fill="#e4e2da"/>
<line x1="600.30" y1="230.20" x2="600.30" y2="236.50" stroke="#a4a4aa" stroke-width="0.7"/>
<line x1="606.70" y1="230.20" x2="606.70" y2="236.50" stroke="#a4a4aa" stroke-width="0.7"/>
<line x1="597.80" y1="230.20" x2="597.80" y2="236.50" stroke="#a4a4aa" stroke-width="0.7"/>
<line x1="609.20" y1="230.20" x2="609.20" y2="236.50" stroke="#a4a4aa" stroke-width="0.7"/>
<line x1="595.30" y1="230.20" x2="595.30" y2="236.50" stroke="#a4a4aa" stroke-width="0.7"/>
<line x1="611.70" y1="230.20" x2="611.70" y2="236.50" stroke="#a4a4aa" stroke-width="0.7"/>
<path d="M600.9 234.70000000000002 L605.1 231.20000000000002 L606.3 232.20000000000002 L603.1 235.10000000000002 Z" fill="#2c2a1c"/>
<path d="M601.7 230.9 L604.7 230.5 L606.1 231.8 L603.3 233.20000000000002 Z" fill="#e9bb08"/>
<circle cx="605.40" cy="233.70" r="0.80" fill="#e9bb08"/>
<circle cx="603.50" cy="238.60" r="0.95" fill="#e6e6ee"/>
<text x="616.70" y="228.70" font-size="3.8" fill="#736f8b" stroke="#736f8b" stroke-width="0.02" textLength="30.00" lengthAdjust="spacingAndGlyphs">Attribute Wrangle</text>
<text x="616.40" y="234.90" font-size="5.15" fill="#f4f4f8" stroke="#f4f4f8" stroke-width="0.1" textLength="32.60" lengthAdjust="spacingAndGlyphs">pointwrangle18</text>
<rect x="617.90" y="237.90" width="1.80" height="1.60" fill="#5f7a58" rx="0.3"/>
<path d="M618.3 237.9 V237.4 Q618.8 236.6 619.3 237.4 V237.9" fill="none" stroke="#5f7a58" stroke-width="0.4"/>
<circle cx="603.50" cy="247.60" r="0.95" fill="#e6e6ee"/>
<g stroke="#2c6410" stroke-width="4.4" stroke-linecap="round"><line x1="598.4" y1="251.65" x2="608.6" y2="257.45"/><line x1="598.4" y1="257.45" x2="608.6" y2="251.65"/></g>
<circle cx="598.40" cy="251.65" r="2.95" fill="#2c6410"/>
<circle cx="608.60" cy="257.45" r="2.95" fill="#2c6410"/>
<circle cx="598.40" cy="257.45" r="2.95" fill="#2c6410"/>
<circle cx="608.60" cy="251.65" r="2.95" fill="#2c6410"/>
<g stroke="#4f9a22" stroke-width="3.5" stroke-linecap="round"><line x1="598.4" y1="251.65" x2="608.6" y2="257.45"/><line x1="598.4" y1="257.45" x2="608.6" y2="251.65"/></g>
<circle cx="598.40" cy="251.65" r="2.50" fill="#4f9a22"/>
<circle cx="608.60" cy="257.45" r="2.50" fill="#4f9a22"/>
<circle cx="598.40" cy="257.45" r="2.50" fill="#4f9a22"/>
<circle cx="608.60" cy="251.65" r="2.50" fill="#4f9a22"/>
<circle cx="603.50" cy="254.55" r="2.00" fill="none" stroke="#d6e8cf" stroke-width="0.5"/>
<circle cx="603.50" cy="254.55" r="0.45" fill="#d6e8cf"/>
<circle cx="603.50" cy="261.70" r="0.95" fill="#e6e6ee"/>
<text x="613.40" y="249.90" font-size="3.8" fill="#736f8b" stroke="#736f8b" stroke-width="0.02" textLength="6.40" lengthAdjust="spacingAndGlyphs">Null</text>
<text x="613.30" y="256.90" font-size="5.1" fill="#f4f4f8" stroke="#f4f4f8" stroke-width="0.1" textLength="46.40" lengthAdjust="spacingAndGlyphs">OUT_DEBRIS_SOURCE</text>
<circle cx="597.20" cy="279.00" r="0.95" fill="#e6e6ee"/>
<circle cx="601.30" cy="279.00" r="0.95" fill="#e6e6ee"/>
<circle cx="605.60" cy="279.00" r="0.95" fill="#e6e6ee"/>
<circle cx="609.80" cy="279.00" r="0.95" fill="#e6e6ee"/>
<rect x="594.40" y="282.60" width="21.30" height="6.00" fill="none" rx="0.7" stroke="#dff2d4" stroke-width="0.5"/>
<rect x="592.45" y="281.50" width="22.10" height="6.30" fill="#4a4370" rx="0.6"/>
<rect x="592.60" y="281.10" width="21.80" height="6.30" fill="#b9ef9f" rx="0.6"/>
<line x1="600.30" y1="281.50" x2="600.30" y2="287.00" stroke="#7fb56a" stroke-width="0.7"/>
<line x1="606.70" y1="281.50" x2="606.70" y2="287.00" stroke="#7fb56a" stroke-width="0.7"/>
<line x1="597.80" y1="281.50" x2="597.80" y2="287.00" stroke="#7fb56a" stroke-width="0.7"/>
<line x1="609.20" y1="281.50" x2="609.20" y2="287.00" stroke="#7fb56a" stroke-width="0.7"/>
<line x1="595.30" y1="281.50" x2="595.30" y2="287.00" stroke="#7fb56a" stroke-width="0.7"/>
<line x1="611.70" y1="281.50" x2="611.70" y2="287.00" stroke="#7fb56a" stroke-width="0.7"/>
<path d="M604.1 281.8 L602.5 284.5 H603.8 L603.0 286.59999999999997 L604.8 283.59999999999997 H603.5 Z" fill="#d8d8e8" stroke="#7a7a9a" stroke-width="0.3"/>
<circle cx="603.50" cy="289.30" r="0.95" fill="#e6e6ee"/>
<text x="616.90" y="279.70" font-size="3.8" fill="#736f8b" stroke="#736f8b" stroke-width="0.02" textLength="22.50" lengthAdjust="spacingAndGlyphs">DOP Network</text>
<text x="616.60" y="285.90" font-size="5.15" fill="#f4f4f8" stroke="#f4f4f8" stroke-width="0.1" textLength="30.60" lengthAdjust="spacingAndGlyphs">secondary_sim</text>
<rect x="617.90" y="289.00" width="1.80" height="1.60" fill="#5f7a58" rx="0.3"/>
<path d="M618.3 289.0 V288.5 Q618.8 287.7 619.3 288.5 V289.0" fill="none" stroke="#5f7a58" stroke-width="0.4"/>
<circle cx="599.20" cy="300.00" r="0.95" fill="#e6e6ee"/>
<circle cx="607.80" cy="300.00" r="0.95" fill="#e6e6ee"/>
<path d="M593.9000000000001 302.5 H614.9 L613.6999999999999 308.8 H591.5 Z" fill="#4a4370"/>
<path d="M593.9000000000001 302.1 H614.9 L613.6999999999999 308.3 H591.5 Z" fill="#e4e2da"/>
<line x1="601.10" y1="302.50" x2="599.50" y2="307.90" stroke="#a4a4aa" stroke-width="0.7"/>
<line x1="607.50" y1="302.50" x2="605.90" y2="307.90" stroke="#a4a4aa" stroke-width="0.7"/>
<line x1="598.60" y1="302.50" x2="597.00" y2="307.90" stroke="#a4a4aa" stroke-width="0.7"/>
<line x1="610.00" y1="302.50" x2="608.40" y2="307.90" stroke="#a4a4aa" stroke-width="0.7"/>
<line x1="596.10" y1="302.50" x2="594.50" y2="307.90" stroke="#a4a4aa" stroke-width="0.7"/>
<line x1="612.50" y1="302.50" x2="610.90" y2="307.90" stroke="#a4a4aa" stroke-width="0.7"/>
<rect x="601.70" y="303.50" width="4.80" height="3.60" fill="#f4f4f4"/>
<path d="M603.2 303.0 L605.7 305.5 M605.7 303.0 L603.2 305.5" fill="none" stroke="#e02020" stroke-width="1.0"/>
<circle cx="603.50" cy="310.20" r="0.95" fill="#e6e6ee"/>
<text x="617.00" y="306.50" font-size="5.15" fill="#f4f4f8" stroke="#f4f4f8" stroke-width="0.1" textLength="27.20" lengthAdjust="spacingAndGlyphs">attribdelete9</text>
<rect x="618.40" y="309.60" width="1.80" height="1.60" fill="#5f7a58" rx="0.3"/>
<path d="M618.8 309.6 V309.1 Q619.3 308.3 619.8 309.1 V309.6" fill="none" stroke="#5f7a58" stroke-width="0.4"/>
<circle cx="603.50" cy="321.60" r="0.95" fill="#e6e6ee"/>
<rect x="592.45" y="324.10" width="22.10" height="6.30" fill="#4a4370" rx="0.6"/>
<rect x="592.60" y="323.70" width="21.80" height="6.30" fill="#e4e2da" rx="0.6"/>
<line x1="600.30" y1="324.10" x2="600.30" y2="329.60" stroke="#a4a4aa" stroke-width="0.7"/>
<line x1="606.70" y1="324.10" x2="606.70" y2="329.60" stroke="#a4a4aa" stroke-width="0.7"/>
<line x1="597.80" y1="324.10" x2="597.80" y2="329.60" stroke="#a4a4aa" stroke-width="0.7"/>
<line x1="609.20" y1="324.10" x2="609.20" y2="329.60" stroke="#a4a4aa" stroke-width="0.7"/>
<line x1="595.30" y1="324.10" x2="595.30" y2="329.60" stroke="#a4a4aa" stroke-width="0.7"/>
<line x1="611.70" y1="324.10" x2="611.70" y2="329.60" stroke="#a4a4aa" stroke-width="0.7"/>
<rect x="601.50" y="325.10" width="4.80" height="3.60" fill="#f4f0e6"/>
<path d="M602.9 328.29999999999995 L605.5 325.09999999999997" fill="none" stroke="#e8a020" stroke-width="1.1"/>
<path d="M602.5 327.29999999999995 L604.1 328.5" fill="none" stroke="#b06a10" stroke-width="0.6"/>
<circle cx="603.50" cy="331.90" r="0.95" fill="#e6e6ee"/>
<text x="616.40" y="328.80" font-size="5.15" fill="#f4f4f8" stroke="#f4f4f8" stroke-width="0.1" textLength="28.00" lengthAdjust="spacingAndGlyphs">groupdelete3</text>
<line x1="616.60" y1="333.20" x2="617.80" y2="333.20" stroke="#7a9ad8" stroke-width="0.5"/>
<circle cx="603.50" cy="348.00" r="11.00" fill="#8d8cdc" opacity="0.72"/>
<path d="M582.2 340.0 H595.4 L598.4 354.40000000000003 V358.8 H578.7 V354.40000000000003 Z" fill="#9d9de4"/>
<path d="M578.7 354.40000000000003 H598.4 V358.0 Q598.4 358.8 597.6 358.8 H579.5 Q578.7 358.8 578.7 358.0 Z" fill="#5a63b6"/>
<circle cx="582.60" cy="356.60" r="0.90" fill="none" stroke="#c8ccf4" stroke-width="0.45"/>
<text x="589.80" y="357.80" font-size="3.2" fill="#c8ccf4" stroke="#c8ccf4" stroke-width="0.1" textLength="5.60" lengthAdjust="spacingAndGlyphs">000</text>
<circle cx="571.50" cy="347.80" r="4.25" fill="#1b1b1e"/>
<line x1="570.00" y1="347.80" x2="573.00" y2="347.80" stroke="#66666a" stroke-width="0.6"/>
<circle cx="603.50" cy="343.00" r="0.95" fill="#e6e6ee"/>
<rect x="592.00" y="344.00" width="23.00" height="8.60" fill="#f3c733" rx="1.3"/>
<rect x="592.90" y="344.90" width="21.20" height="6.80" fill="#f1d78a" rx="0.5"/>
<line x1="600.30" y1="345.30" x2="600.30" y2="351.30" stroke="#b09040" stroke-width="0.7"/>
<line x1="606.70" y1="345.30" x2="606.70" y2="351.30" stroke="#b09040" stroke-width="0.7"/>
<line x1="597.80" y1="345.30" x2="597.80" y2="351.30" stroke="#b09040" stroke-width="0.7"/>
<line x1="609.20" y1="345.30" x2="609.20" y2="351.30" stroke="#b09040" stroke-width="0.7"/>
<line x1="595.30" y1="345.30" x2="595.30" y2="351.30" stroke="#b09040" stroke-width="0.7"/>
<line x1="611.70" y1="345.30" x2="611.70" y2="351.30" stroke="#b09040" stroke-width="0.7"/>
<line x1="593.40" y1="348.60" x2="611.00" y2="348.60" stroke="#6a5a30" stroke-width="0.5"/>
<rect x="601.40" y="346.30" width="4.20" height="3.30" fill="#f7f7f7" rx="0.3"/>
<rect x="601.40" y="348.60" width="4.20" height="1.00" fill="#8a8a90"/>
<rect x="611.20" y="344.90" width="2.90" height="6.80" fill="#1f9cf0"/>
<circle cx="603.50" cy="355.20" r="0.95" fill="#e6e6ee"/>
<text x="616.70" y="344.40" font-size="3.8" fill="#736f8b" stroke="#736f8b" stroke-width="0.02" textLength="17.50" lengthAdjust="spacingAndGlyphs">File Cache</text>
<text x="616.40" y="350.60" font-size="5.15" fill="#f4f4f8" stroke="#f4f4f8" stroke-width="0.1" textLength="25.00" lengthAdjust="spacingAndGlyphs">secondaries</text>
<circle cx="618.80" cy="354.30" r="1.15" fill="#23301c"/>
<circle cx="618.80" cy="354.30" r="0.50" fill="#5fae3c"/>
<rect x="622.40" y="353.90" width="1.80" height="1.60" fill="#5f7a58" rx="0.3"/>
<path d="M622.8 353.90000000000003 V353.40000000000003 Q623.3 352.6 623.8 353.40000000000003 V353.90000000000003" fill="none" stroke="#5f7a58" stroke-width="0.4"/>
<text x="616.40" y="360.40" font-size="3.7" fill="#6fa4ea" stroke="#6fa4ea" stroke-width="0.1" textLength="48.40" lengthAdjust="spacingAndGlyphs">secondaries_v1.$F4.bgeo.sc</text>
<circle cx="597.20" cy="367.05" r="0.95" fill="#e6e6ee"/>
<circle cx="601.30" cy="367.50" r="0.95" fill="#e6e6ee"/>
<circle cx="605.60" cy="367.95" r="0.95" fill="#e6e6ee"/>
<circle cx="609.80" cy="368.40" r="0.95" fill="#e6e6ee"/>
<path d="M592.7 369.45 Q600.5 369.25 603.5 369.85 T614.3 370.25 V376.05 Q607.5 377.45 603.5 376.95 Q598.5 376.34999999999997 592.7 375.75 Z" fill="#4a4370"/>
<path d="M592.7 369.0 Q600.5 368.8 603.5 369.40000000000003 T614.3 369.8 V375.6 Q607.5 377.0 603.5 376.5 Q598.5 375.9 592.7 375.3 Z" fill="#e4e2da"/>
<line x1="600.30" y1="370.00" x2="600.30" y2="375.70" stroke="#a4a4aa" stroke-width="0.7"/>
<line x1="606.70" y1="370.00" x2="606.70" y2="375.70" stroke="#a4a4aa" stroke-width="0.7"/>
<line x1="597.80" y1="370.00" x2="597.80" y2="375.70" stroke="#a4a4aa" stroke-width="0.7"/>
<line x1="609.20" y1="370.00" x2="609.20" y2="375.70" stroke="#a4a4aa" stroke-width="0.7"/>
<line x1="595.30" y1="370.00" x2="595.30" y2="375.70" stroke="#a4a4aa" stroke-width="0.7"/>
<line x1="611.70" y1="370.00" x2="611.70" y2="375.70" stroke="#a4a4aa" stroke-width="0.7"/>
<path d="M600.9 374.29999999999995 L605.1 370.79999999999995 L606.3 371.79999999999995 L603.1 374.7 Z" fill="#2c2a1c"/>
<path d="M601.7 370.5 L604.7 370.09999999999997 L606.1 371.4 L603.3 372.79999999999995 Z" fill="#e9bb08"/>
<circle cx="605.40" cy="373.30" r="0.80" fill="#e9bb08"/>
<circle cx="603.50" cy="377.70" r="0.95" fill="#e6e6ee"/>
<text x="616.70" y="367.70" font-size="3.8" fill="#736f8b" stroke="#736f8b" stroke-width="0.02" textLength="30.00" lengthAdjust="spacingAndGlyphs">Attribute Wrangle</text>
<text x="616.40" y="373.90" font-size="5.15" fill="#f4f4f8" stroke="#f4f4f8" stroke-width="0.1" textLength="13.20" lengthAdjust="spacingAndGlyphs">pscale</text>
<rect x="617.90" y="376.90" width="1.80" height="1.60" fill="#5f7a58" rx="0.3"/>
<path d="M618.3 376.90000000000003 V376.40000000000003 Q618.8 375.6 619.3 376.40000000000003 V376.90000000000003" fill="none" stroke="#5f7a58" stroke-width="0.4"/>
<circle cx="599.20" cy="389.30" r="0.95" fill="#e6e6ee"/>
<circle cx="607.80" cy="389.30" r="0.95" fill="#e6e6ee"/>
<path d="M593.9000000000001 391.7 H614.9 L613.6999999999999 398.2 H591.5 Z" fill="#4a4370"/>
<path d="M593.9000000000001 391.3 H614.9 L613.6999999999999 397.7 H591.5 Z" fill="#e4e2da"/>
<line x1="601.10" y1="391.70" x2="599.50" y2="397.30" stroke="#a4a4aa" stroke-width="0.7"/>
<line x1="607.50" y1="391.70" x2="605.90" y2="397.30" stroke="#a4a4aa" stroke-width="0.7"/>
<line x1="598.60" y1="391.70" x2="597.00" y2="397.30" stroke="#a4a4aa" stroke-width="0.7"/>
<line x1="610.00" y1="391.70" x2="608.40" y2="397.30" stroke="#a4a4aa" stroke-width="0.7"/>
<line x1="596.10" y1="391.70" x2="594.50" y2="397.30" stroke="#a4a4aa" stroke-width="0.7"/>
<line x1="612.50" y1="391.70" x2="610.90" y2="397.30" stroke="#a4a4aa" stroke-width="0.7"/>
<rect x="601.70" y="392.70" width="4.80" height="3.60" fill="#f4f4f4"/>
<path d="M603.2 392.2 L605.7 394.7 M605.7 392.2 L603.2 394.7" fill="none" stroke="#e02020" stroke-width="1.0"/>
<circle cx="603.50" cy="399.60" r="0.95" fill="#e6e6ee"/>
<text x="617.00" y="396.10" font-size="5.15" fill="#f4f4f8" stroke="#f4f4f8" stroke-width="0.1" textLength="29.80" lengthAdjust="spacingAndGlyphs">attribdelete10</text>
<rect x="618.40" y="399.10" width="1.80" height="1.60" fill="#5f7a58" rx="0.3"/>
<path d="M618.8 399.1 V398.6 Q619.3 397.8 619.8 398.6 V399.1" fill="none" stroke="#5f7a58" stroke-width="0.4"/>
<circle cx="603.50" cy="410.80" r="0.95" fill="#e6e6ee"/>
<g stroke="#2c6410" stroke-width="4.4" stroke-linecap="round"><line x1="598.4" y1="414.40000000000003" x2="608.6" y2="420.2"/><line x1="598.4" y1="420.2" x2="608.6" y2="414.40000000000003"/></g>
<circle cx="598.40" cy="414.40" r="2.95" fill="#2c6410"/>
<circle cx="608.60" cy="420.20" r="2.95" fill="#2c6410"/>
<circle cx="598.40" cy="420.20" r="2.95" fill="#2c6410"/>
<circle cx="608.60" cy="414.40" r="2.95" fill="#2c6410"/>
<g stroke="#4f9a22" stroke-width="3.5" stroke-linecap="round"><line x1="598.4" y1="414.40000000000003" x2="608.6" y2="420.2"/><line x1="598.4" y1="420.2" x2="608.6" y2="414.40000000000003"/></g>
<circle cx="598.40" cy="414.40" r="2.50" fill="#4f9a22"/>
<circle cx="608.60" cy="420.20" r="2.50" fill="#4f9a22"/>
<circle cx="598.40" cy="420.20" r="2.50" fill="#4f9a22"/>
<circle cx="608.60" cy="414.40" r="2.50" fill="#4f9a22"/>
<circle cx="603.50" cy="417.30" r="2.00" fill="none" stroke="#d6e8cf" stroke-width="0.5"/>
<circle cx="603.50" cy="417.30" r="0.45" fill="#d6e8cf"/>
<circle cx="603.50" cy="424.90" r="0.95" fill="#e6e6ee"/>
<text x="613.40" y="413.20" font-size="3.8" fill="#736f8b" stroke="#736f8b" stroke-width="0.02" textLength="6.40" lengthAdjust="spacingAndGlyphs">Null</text>
<text x="613.30" y="420.00" font-size="5.1" fill="#f4f4f8" stroke="#f4f4f8" stroke-width="0.1" textLength="41.40" lengthAdjust="spacingAndGlyphs">OUT_SECONDARIES</text>
</g>
<text x="856.80" y="55.70" font-size="8.2" fill="#5b5b5b" stroke="#5b5b5b" stroke-width="0.1" textLength="39.20" lengthAdjust="spacingAndGlyphs" font-weight="bold">Geometry</text>
</g>
<g id="chrome" filter="url(#soft)">
<g id="shelf">
<path d="M7.6000000000000005 0 V3.6 L10.5 5.4 L14.0 3.6 V0 Z" fill="#aab6c2"/>
<path d="M10.5 1.6 V5.4 L14.0 3.6 V0 Z" fill="#8796a6"/>
<text x="7.94" y="9.90" font-size="3.9" fill="#dedede" stroke="#dedede" stroke-width="0.1" textLength="5.71" lengthAdjust="spacingAndGlyphs">Box</text>
<circle cx="25.00" cy="1.20" r="3.40" fill="#a9b3bd"/>
<circle cx="24.20" cy="0.40" r="1.60" fill="#c8d0d8"/>
<text x="19.65" y="9.90" font-size="3.9" fill="#dedede" stroke="#dedede" stroke-width="0.1" textLength="10.69" lengthAdjust="spacingAndGlyphs">Sphere</text>
<rect x="37.40" y="0.00" width="3.80" height="5.00" fill="#aeb8c2" rx="1.0"/>
<rect x="39.10" y="0.00" width="1.40" height="5.00" fill="#8c9aa8"/>
<text x="35.58" y="9.90" font-size="3.9" fill="#dedede" stroke="#dedede" stroke-width="0.1" textLength="7.43" lengthAdjust="spacingAndGlyphs">Tube</text>
<ellipse cx="54.0" cy="2.9" rx="3.4" ry="1.7" fill="none" stroke="#7d9bb8" stroke-width="1.3"/>
<text x="49.95" y="9.90" font-size="3.9" fill="#dedede" stroke="#dedede" stroke-width="0.1" textLength="8.11" lengthAdjust="spacingAndGlyphs">Torus</text>
<path d="M65.1 4.2 L66.7 2.6 H70.1 L71.5 4.2 Z" fill="#c4ccd4"/>
<rect x="65.10" y="4.20" width="6.40" height="0.70" fill="#8e98a2"/>
<text x="65.17" y="9.90" font-size="3.9" fill="#dedede" stroke="#dedede" stroke-width="0.1" textLength="6.26" lengthAdjust="spacingAndGlyphs">Grid</text>
<line x1="82.70" y1="0.00" x2="82.70" y2="5.60" stroke="#e0b020" stroke-width="0.9"/>
<line x1="80.10" y1="1.20" x2="85.30" y2="4.40" stroke="#d03030" stroke-width="0.9"/>
<line x1="85.30" y1="1.20" x2="80.10" y2="4.40" stroke="#3060d0" stroke-width="0.9"/>
<text x="79.84" y="9.90" font-size="3.9" fill="#dedede" stroke="#dedede" stroke-width="0.1" textLength="5.71" lengthAdjust="spacingAndGlyphs">Null</text>
<line x1="94.30" y1="5.60" x2="98.70" y2="0.00" stroke="#c83c3c" stroke-width="0.8"/>
<line x1="97.30" y1="0.00" x2="100.10" y2="5.40" stroke="#6a6a6a" stroke-width="0.6"/>
<text x="93.97" y="9.90" font-size="3.9" fill="#dedede" stroke="#dedede" stroke-width="0.1" textLength="6.27" lengthAdjust="spacingAndGlyphs">Line</text>
<circle cx="111.60" cy="1.40" r="3.10" fill="none" stroke="#4a66a8" stroke-width="0.8"/>
<text x="107.36" y="9.90" font-size="3.9" fill="#dedede" stroke="#dedede" stroke-width="0.1" textLength="8.47" lengthAdjust="spacingAndGlyphs">Circle</text>
<line x1="126.10" y1="0.20" x2="131.90" y2="5.00" stroke="#3f6fd0" stroke-width="1.5"/>
<line x1="126.70" y1="0.00" x2="132.70" y2="2.00" stroke="#d8d8d8" stroke-width="0.7"/>
<circle cx="132.30" cy="0.60" r="0.80" fill="#d03030"/>
<circle cx="127.30" cy="2.60" r="0.70" fill="#e0e0e0"/>
<text x="119.72" y="9.90" font-size="3.9" fill="#dedede" stroke="#dedede" stroke-width="0.1" textLength="19.16" lengthAdjust="spacingAndGlyphs">Curve Bezier</text>
<line x1="151.80" y1="0.00" x2="148.20" y2="5.00" stroke="#4a86d8" stroke-width="1.5"/>
<line x1="148.20" y1="5.00" x2="146.60" y2="5.80" stroke="#202020" stroke-width="1.2"/>
<text x="140.45" y="9.90" font-size="3.9" fill="#dedede" stroke="#dedede" stroke-width="0.1" textLength="17.50" lengthAdjust="spacingAndGlyphs">Draw Curve</text>
<line x1="168.60" y1="0.00" x2="165.40" y2="5.20" stroke="#4a86d8" stroke-width="1.3"/>
<circle cx="163.80" cy="0.60" r="0.60" fill="#e0b020"/>
<circle cx="163.40" cy="3.60" r="0.60" fill="#e0b020"/>
<circle cx="167.00" cy="0.20" r="0.60" fill="#e0b020"/>
<text x="162.79" y="9.90" font-size="3.9" fill="#dedede" stroke="#dedede" stroke-width="0.1" textLength="6.82" lengthAdjust="spacingAndGlyphs">Path</text>
<line x1="185.20" y1="0.20" x2="181.40" y2="4.60" stroke="#e4e4e4" stroke-width="2.4"/>
<line x1="185.60" y1="0.00" x2="183.80" y2="2.00" stroke="#c83030" stroke-width="2.2"/>
<text x="174.43" y="9.90" font-size="3.9" fill="#dedede" stroke="#dedede" stroke-width="0.1" textLength="17.14" lengthAdjust="spacingAndGlyphs">Spray Paint</text>
<rect x="196.90" y="0.00" width="5.20" height="1.40" fill="#b8c0c8"/>
<rect x="198.60" y="0.00" width="1.80" height="5.20" fill="#b8c0c8"/>
<rect x="197.70" y="4.40" width="3.60" height="0.90" fill="#98a2ac"/>
<text x="196.18" y="9.90" font-size="3.9" fill="#dedede" stroke="#dedede" stroke-width="0.1" textLength="6.63" lengthAdjust="spacingAndGlyphs">Font</text>
<path d="M216.7 3.0 L219.5 0 L222.3 3.0 L219.5 4.6 Z" fill="#a9b3bd"/>
<path d="M219.5 0 L222.3 3.0 L219.5 4.6 Z" fill="#8b97a3"/>
<text x="213.60" y="7.50" font-size="3.9" fill="#dedede" stroke="#dedede" stroke-width="0.1" textLength="11.79" lengthAdjust="spacingAndGlyphs">Platonic</text>
<text x="214.99" y="10.60" font-size="3.9" fill="#dedede" stroke="#dedede" stroke-width="0.1" textLength="9.03" lengthAdjust="spacingAndGlyphs">Solids</text>
<path d="M239.3 5.2 V0 M239.3 3.4 L236.5 0.4 M239.3 3.0 L242.10000000000002 0.4 M237.70000000000002 5.2 L236.70000000000002 2.4 M240.9 5.2 L241.9 2.4" fill="none" stroke="#3c6cb8" stroke-width="0.9"/>
<text x="232.30" y="9.90" font-size="3.9" fill="#dedede" stroke="#dedede" stroke-width="0.1" textLength="14.00" lengthAdjust="spacingAndGlyphs">L-System</text>
<circle cx="253.50" cy="1.00" r="1.90" fill="#4a80d0"/>
<circle cx="256.50" cy="3.20" r="1.80" fill="#e6ecf4"/>
<circle cx="255.30" cy="1.80" r="1.20" fill="#7aa4e0"/>
<text x="248.63" y="9.90" font-size="3.9" fill="#dedede" stroke="#dedede" stroke-width="0.1" textLength="12.53" lengthAdjust="spacingAndGlyphs">Metaball</text>
<path d="M266.59999999999997 0 H270.2 L272.0 2.0 V5.0 H266.59999999999997 Z" fill="#f0f0f0"/>
<path d="M266.59999999999997 0 H269.8 L268.2 3.4 H266.59999999999997 Z" fill="#e88a28"/>
<text x="266.53" y="9.90" font-size="3.9" fill="#dedede" stroke="#dedede" stroke-width="0.1" textLength="5.34" lengthAdjust="spacingAndGlyphs">File</text>
<circle cx="283.90" cy="1.40" r="3.20" fill="#a8683c"/>
<circle cx="283.90" cy="1.40" r="2.00" fill="none" stroke="#e0a070" stroke-width="0.6"/>
<circle cx="283.90" cy="1.40" r="0.80" fill="#e0a070"/>
<text x="279.66" y="9.90" font-size="3.9" fill="#dedede" stroke="#dedede" stroke-width="0.1" textLength="8.48" lengthAdjust="spacingAndGlyphs">Spiral</text>
<path d="M295.3 4.8 L297.90000000000003 0 L301.3 4.2 Q298.3 6.0 295.3 4.8 Z" fill="#b5733c"/>
<path d="M296.7 3.0 Q298.3 4.2 300.1 2.8" fill="none" stroke="#e6b080" stroke-width="0.6"/>
<text x="294.62" y="9.90" font-size="3.9" fill="#dedede" stroke="#dedede" stroke-width="0.1" textLength="7.37" lengthAdjust="spacingAndGlyphs">Helix</text>
<path d="M313.8 3.6 L317.0 0.4 L319.8 3.0 L316.8 5.4 Z" fill="#58b03c"/>
<path d="M316.40000000000003 2.0 L319.40000000000003 0.6 L319.8 3.0 Z" fill="#e8f0e8"/>
<text x="306.48" y="9.90" font-size="3.9" fill="#dedede" stroke="#dedede" stroke-width="0.1" textLength="20.64" lengthAdjust="spacingAndGlyphs">Quick Shapes</text>
<path d="M459.5 2.6 Q462.5 -1.4 465.5 2.6" fill="none" stroke="#5a7484" stroke-width="0.9"/>
<line x1="462.10" y1="0.40" x2="463.50" y2="3.00" stroke="#9ab0c0" stroke-width="0.7"/>
<circle cx="460.50" cy="3.00" r="0.60" fill="#2a3a46"/>
<text x="456.60" y="9.90" font-size="3.9" fill="#dedede" stroke="#dedede" stroke-width="0.1" textLength="11.79" lengthAdjust="spacingAndGlyphs">Camera</text>
<circle cx="479.50" cy="1.40" r="1.70" fill="#fff7c8"/>
<path d="M476.1 1.4 H482.9 M479.5 0 V5.0 M477.1 -1 L481.9 3.8 M481.9 -1 L477.1 3.8" fill="none" stroke="#f0e6a0" stroke-width="0.5"/>
<text x="471.67" y="9.90" font-size="3.9" fill="#dedede" stroke="#dedede" stroke-width="0.1" textLength="15.67" lengthAdjust="spacingAndGlyphs">Point Light</text>
<circle cx="497.90" cy="1.60" r="2.40" fill="#f2f2f2"/>
<path d="M494.5 0 L496.9 2.2" fill="none" stroke="#e08a30" stroke-width="1.4"/>
<path d="M497.5 3.4 L500.3 5.2" fill="none" stroke="#f0e080" stroke-width="0.6"/>
<text x="490.04" y="9.90" font-size="3.9" fill="#dedede" stroke="#dedede" stroke-width="0.1" textLength="14.93" lengthAdjust="spacingAndGlyphs">Spot Light</text>
<rect x="512.00" y="0.00" width="5.60" height="1.50" fill="#f0d860"/>
<path d="M512.5999999999999 1.6 V5.0 M514.8 1.6 V5.2 M517.0 1.6 V5.0" fill="none" stroke="#e8cc50" stroke-width="0.7"/>
<text x="507.24" y="9.90" font-size="3.9" fill="#dedede" stroke="#dedede" stroke-width="0.1" textLength="15.11" lengthAdjust="spacingAndGlyphs">Area Light</text>
<path d="M533.4000000000001 0 L536.8000000000001 3.4 L535.0 4.6 Z" fill="#8a5cc0"/>
<circle cx="536.00" cy="1.00" r="1.30" fill="#e89038"/>
<text x="527.92" y="7.50" font-size="3.9" fill="#dedede" stroke="#dedede" stroke-width="0.1" textLength="14.55" lengthAdjust="spacingAndGlyphs">Geometry</text>
<text x="531.61" y="10.60" font-size="3.9" fill="#dedede" stroke="#dedede" stroke-width="0.1" textLength="7.19" lengthAdjust="spacingAndGlyphs">Light</text>
<path d="M555.3 3.6 Q554.9 0.6 557.5 -0.6 Q560.1 0.6 559.7 3.6 Q557.5 5.4 555.3 3.6 Z" fill="#e86a20"/>
<circle cx="557.50" cy="2.40" r="1.20" fill="#f8d040"/>
<text x="547.92" y="9.90" font-size="3.9" fill="#dedede" stroke="#dedede" stroke-width="0.1" textLength="19.17" lengthAdjust="spacingAndGlyphs">Volume Light</text>
<circle cx="578.50" cy="1.00" r="2.30" fill="#f4d84a"/>
<path d="M579.5 2.6 L581.6999999999999 5.0 M578.3 3.2 L579.5 5.4" fill="none" stroke="#f4d84a" stroke-width="0.7"/>
<text x="569.69" y="9.90" font-size="3.9" fill="#dedede" stroke="#dedede" stroke-width="0.1" textLength="18.43" lengthAdjust="spacingAndGlyphs">Distant Light</text>
<path d="M598.0 2.8 Q598.0 -1.6 601.2 -1.6 Q604.4000000000001 -1.6 604.4000000000001 2.8 Z" fill="#f2d64a"/>
<ellipse cx="601.2" cy="2.9" rx="3.2" ry="1.5" fill="#4a6aa8"/>
<circle cx="601.20" cy="2.40" r="1.00" fill="#f8f0c0"/>
<text x="591.89" y="7.50" font-size="3.9" fill="#dedede" stroke="#dedede" stroke-width="0.1" textLength="18.61" lengthAdjust="spacingAndGlyphs">Environment</text>
<text x="597.61" y="10.60" font-size="3.9" fill="#dedede" stroke="#dedede" stroke-width="0.1" textLength="7.19" lengthAdjust="spacingAndGlyphs">Light</text>
<path d="M617.3 2.6 Q617.3 -1.4 620.3 -1.4 Q623.3 -1.4 623.3 2.6 Z" fill="#f0d040"/>
<ellipse cx="620.3" cy="2.8" rx="3.0" ry="1.5" fill="#3a62b0"/>
<text x="613.48" y="9.90" font-size="3.9" fill="#dedede" stroke="#dedede" stroke-width="0.1" textLength="13.64" lengthAdjust="spacingAndGlyphs">Sky Light</text>
<circle cx="636.20" cy="1.40" r="2.80" fill="#e8e8e8"/>
<circle cx="635.60" cy="1.00" r="1.60" fill="#f4d8d8"/>
<circle cx="637.20" cy="2.20" r="1.10" fill="#c8e4d0"/>
<text x="630.40" y="9.90" font-size="3.9" fill="#dedede" stroke="#dedede" stroke-width="0.1" textLength="11.61" lengthAdjust="spacingAndGlyphs">GI Light</text>
<path d="M651.8000000000001 0 Q652.2 4.0 656.8000000000001 4.6" fill="none" stroke="#7aaae8" stroke-width="1.3"/>
<text x="644.62" y="9.90" font-size="3.9" fill="#dedede" stroke="#dedede" stroke-width="0.1" textLength="19.16" lengthAdjust="spacingAndGlyphs">Caustic Light</text>
<path d="M671.4 0 L676.4 4.8" fill="none" stroke="#b8c83c" stroke-width="1.6"/>
<path d="M672.8 0 L677.0 4.0" fill="none" stroke="#7a9a28" stroke-width="0.7"/>
<text x="665.62" y="9.90" font-size="3.9" fill="#dedede" stroke="#dedede" stroke-width="0.1" textLength="16.77" lengthAdjust="spacingAndGlyphs">Portal Light</text>
<circle cx="696.20" cy="1.00" r="2.00" fill="#f0f4f8"/>
<rect x="695.40" y="2.80" width="1.60" height="1.60" fill="#b0bcc8"/>
<line x1="696.20" y1="4.40" x2="696.20" y2="5.40" stroke="#d0d8e0" stroke-width="0.5"/>
<text x="686.06" y="9.90" font-size="3.9" fill="#dedede" stroke="#dedede" stroke-width="0.1" textLength="20.27" lengthAdjust="spacingAndGlyphs">Ambient Light</text>
<rect x="716.30" y="0.40" width="6.00" height="3.00" fill="#3c566c" rx="0.6"/>
<circle cx="717.90" cy="2.00" r="0.90" fill="#c8d8e4"/>
<circle cx="720.90" cy="2.00" r="0.90" fill="#c8d8e4"/>
<text x="714.42" y="7.50" font-size="3.9" fill="#dedede" stroke="#dedede" stroke-width="0.1" textLength="9.77" lengthAdjust="spacingAndGlyphs">Stereo</text>
<text x="713.40" y="10.60" font-size="3.9" fill="#dedede" stroke="#dedede" stroke-width="0.1" textLength="11.79" lengthAdjust="spacingAndGlyphs">Camera</text>
<ellipse cx="740.4" cy="2.2" rx="3.2" ry="2.0" fill="none" stroke="#4a6a88" stroke-width="0.9"/>
<rect x="739.20" y="0.40" width="2.40" height="1.40" fill="#7a94ac"/>
<text x="731.74" y="9.90" font-size="3.9" fill="#dedede" stroke="#dedede" stroke-width="0.1" textLength="17.32" lengthAdjust="spacingAndGlyphs">VR Camera</text>
<path d="M755.5 0 L759.9 4.4 L757.9 5.4 L756.5 3.0 Z" fill="#e4e4e4"/>
<circle cx="755.90" cy="0.60" r="1.00" fill="#b0b0b0"/>
<text x="751.14" y="9.90" font-size="3.9" fill="#dedede" stroke="#dedede" stroke-width="0.1" textLength="12.71" lengthAdjust="spacingAndGlyphs">Switcher</text>
<path d="M773.8 4.8 Q773.6 0.2 775.4 0.2 H778.6 Q780.4 0.2 780.2 4.8 L778.4 3.0 H775.6 Z" fill="#ececec"/>
<circle cx="778.60" cy="1.60" r="0.60" fill="#d04040"/>
<rect x="774.80" y="1.20" width="1.30" height="0.50" fill="#707070"/>
<text x="769.72" y="7.50" font-size="3.9" fill="#dedede" stroke="#dedede" stroke-width="0.1" textLength="14.56" lengthAdjust="spacingAndGlyphs">Gamepad</text>
<text x="771.10" y="10.60" font-size="3.9" fill="#dedede" stroke="#dedede" stroke-width="0.1" textLength="11.79" lengthAdjust="spacingAndGlyphs">Camera</text>
</g>
<g id="tabs">
<text x="4.60" y="17.20" font-size="4.3" fill="#d6d6d6" stroke="#d6d6d6" stroke-width="0.1" textLength="17.20" lengthAdjust="spacingAndGlyphs">Scene View</text>
<path d="M27.7 15.200000000000001 L29.099999999999998 16.6 M29.099999999999998 15.200000000000001 L27.7 16.6" fill="none" stroke="#d0d0d0" stroke-width="0.55"/>
<rect x="31.80" y="13.00" width="36.80" height="6.30" fill="#1e1e1e"/>
<text x="34.00" y="17.20" font-size="4.3" fill="#bdbdbd" stroke="#bdbdbd" stroke-width="0.1" textLength="26.80" lengthAdjust="spacingAndGlyphs">Animation Editor</text>
<path d="M64.8 15.200000000000001 L66.2 16.6 M66.2 15.200000000000001 L64.8 16.6" fill="none" stroke="#d0d0d0" stroke-width="0.55"/>
<rect x="69.20" y="13.00" width="31.40" height="6.30" fill="#1e1e1e"/>
<text x="71.40" y="17.20" font-size="4.3" fill="#bdbdbd" stroke="#bdbdbd" stroke-width="0.1" textLength="19.20" lengthAdjust="spacingAndGlyphs">Render View</text>
<path d="M96.3 15.200000000000001 L97.7 16.6 M97.7 15.200000000000001 L96.3 16.6" fill="none" stroke="#d0d0d0" stroke-width="0.55"/>
<rect x="101.20" y="13.00" width="34.40" height="6.30" fill="#1e1e1e"/>
<text x="102.60" y="17.20" font-size="4.3" fill="#bdbdbd" stroke="#bdbdbd" stroke-width="0.1" textLength="25.00" lengthAdjust="spacingAndGlyphs">Composite View</text>
<path d="M131.3 15.200000000000001 L132.7 16.6 M132.7 15.200000000000001 L131.3 16.6" fill="none" stroke="#d0d0d0" stroke-width="0.55"/>
<rect x="136.20" y="13.00" width="33.40" height="6.30" fill="#1e1e1e"/>
<text x="138.20" y="17.20" font-size="4.3" fill="#bdbdbd" stroke="#bdbdbd" stroke-width="0.1" textLength="23.70" lengthAdjust="spacingAndGlyphs">Motion FX View</text>
<path d="M165.60000000000002 15.200000000000001 L167.0 16.6 M167.0 15.200000000000001 L165.60000000000002 16.6" fill="none" stroke="#d0d0d0" stroke-width="0.55"/>
<rect x="170.20" y="13.00" width="46.40" height="6.30" fill="#1e1e1e"/>
<text x="173.00" y="17.20" font-size="4.3" fill="#bdbdbd" stroke="#bdbdbd" stroke-width="0.1" textLength="35.80" lengthAdjust="spacingAndGlyphs">Geometry Spreadsheet</text>
<path d="M211.9 15.200000000000001 L213.29999999999998 16.6 M213.29999999999998 15.200000000000001 L211.9 16.6" fill="none" stroke="#d0d0d0" stroke-width="0.55"/>
<path d="M218.8 16.1 H221.8 M220.3 14.6 V17.6" fill="none" stroke="#e0e0e0" stroke-width="0.7"/>
<rect x="496.20" y="14.40" width="4.20" height="3.20" fill="#e8e8e8" rx="0.3"/>
<line x1="498.30" y1="14.40" x2="498.30" y2="17.60" stroke="#9a9a9a" stroke-width="0.4"/>
<path d="M503.4 15.2 H506.2 L504.8 17.0 Z" fill="#e0e0e0"/>
<text x="513.20" y="19.80" font-size="4.3" fill="#b0b0b0" stroke="#b0b0b0" stroke-width="0.1" textLength="28.80" lengthAdjust="spacingAndGlyphs" font-style="italic">/obj/SIM_Landslide</text>
<path d="M546.8 17.7 L548.2 19.099999999999998 M548.2 17.7 L546.8 19.099999999999998" fill="none" stroke="#d0d0d0" stroke-width="0.55"/>
<rect x="551.20" y="15.20" width="26.40" height="6.20" fill="#1e1e1e"/>
<text x="553.30" y="19.80" font-size="4.3" fill="#bdbdbd" stroke="#bdbdbd" stroke-width="0.1" textLength="15.10" lengthAdjust="spacingAndGlyphs">Tree View</text>
<path d="M573.6999999999999 17.7 L575.1 19.099999999999998 M575.1 17.7 L573.6999999999999 19.099999999999998" fill="none" stroke="#d0d0d0" stroke-width="0.55"/>
<rect x="578.40" y="15.20" width="34.60" height="6.20" fill="#1e1e1e"/>
<text x="580.20" y="19.80" font-size="4.3" fill="#bdbdbd" stroke="#bdbdbd" stroke-width="0.1" textLength="25.20" lengthAdjust="spacingAndGlyphs">Material Palette</text>
<path d="M609.3 17.7 L610.7 19.099999999999998 M610.7 17.7 L609.3 19.099999999999998" fill="none" stroke="#d0d0d0" stroke-width="0.55"/>
<rect x="613.80" y="15.20" width="32.40" height="6.20" fill="#1e1e1e"/>
<text x="615.80" y="19.80" font-size="4.3" fill="#bdbdbd" stroke="#bdbdbd" stroke-width="0.1" textLength="21.80" lengthAdjust="spacingAndGlyphs">Asset Browser</text>
<path d="M642.5 17.7 L643.9000000000001 19.099999999999998 M643.9000000000001 17.7 L642.5 19.099999999999998" fill="none" stroke="#d0d0d0" stroke-width="0.55"/>
<path d="M649.8 18.4 H652.8 M651.3 16.9 V19.9" fill="none" stroke="#e0e0e0" stroke-width="0.7"/>
<rect x="888.60" y="16.80" width="3.80" height="3.00" fill="#e8e8e8" rx="0.3"/>
<path d="M895.9 17.6 L897.3000000000001 19.0 M897.3000000000001 17.6 L895.9 19.0" fill="none" stroke="#e0e0e0" stroke-width="0.55"/>
</g>
<g id="pathbars">
<path d="M4.4 25.2 L7.2 22.8 V24.2 H9.4 V26.2 H7.2 V27.599999999999998 Z" fill="#e6e6e6"/>
<path d="M8.6 27.099999999999998 L9.6 28.2 H8.6 Z" fill="#d0d0d0"/>
<path d="M17.6 25.2 L15.2 23.2 V24.4 H13.2 V26.0 H15.2 V27.2 Z" fill="#5c5c5c"/>
<rect x="21.60" y="20.80" width="17.4" height="8.8" rx="1.2" fill="#3d3d3d" stroke="#2b2b2b" stroke-width="0.5"/>
<path d="M24.2 22.599999999999998 V27.599999999999998 H29.4" fill="none" stroke="#b8c4cc" stroke-width="0.8"/>
<rect x="24.90" y="25.80" width="4.40" height="1.60" fill="#6f8a9a"/>
<rect x="23.60" y="22.20" width="1.30" height="1.30" fill="#9fd0f0"/>
<text x="31.30" y="26.80" font-size="4.8" fill="#d8d8d8" stroke="#d8d8d8" stroke-width="0.1" textLength="5.70" lengthAdjust="spacingAndGlyphs">obj</text>
<path d="M39.0 20.799999999999997 L40.8 25.2 L39.0 29.6" fill="none" stroke="#2b2b2b" stroke-width="0.5"/>
<circle cx="45.30" cy="24.40" r="1.90" fill="#3c6fd0"/>
<circle cx="48.70" cy="25.60" r="1.90" fill="#d83030"/>
<circle cx="46.60" cy="26.80" r="1.90" fill="#f0d020"/>
<path d="M44.199999999999996 22.7 H46.4 V25.900000000000002 H44.199999999999996 Z" fill="#e8e8f0" opacity="0.85"/>
<text x="51.70" y="26.90" font-size="4.8" fill="#dcdcdc" stroke="#dcdcdc" stroke-width="0.1" textLength="25.60" lengthAdjust="spacingAndGlyphs">SIM_Landslide</text>
<rect x="453.40" y="20.80" width="6.2" height="8.6" rx="0.6" fill="#262626" stroke="#1f1f1f" stroke-width="0.4"/>
<path d="M455.2 24.599999999999998 H457.8 L456.5 26.2 Z" fill="#9a9a9a"/>
<path d="M463.4 25.2 H465.6 M465.6 23.5 V26.9 L468.2 26.099999999999998 V24.3 Z" fill="#d8d8d8" stroke="#d8d8d8" stroke-width="0.5"/>
<circle cx="474.80" cy="25.20" r="2.70" fill="#2c3c54" stroke="#4f7fc0" stroke-width="0.8"/>
<line x1="474.80" y1="23.80" x2="474.80" y2="25.40" stroke="#4f7fc0" stroke-width="0.5"/>
<path d="M512.3 27.4 L515.1 25.0 V26.4 H517.3 V28.4 H515.1 V29.799999999999997 Z" fill="#e6e6e6"/>
<path d="M516.5 29.299999999999997 L517.5 30.4 H516.5 Z" fill="#d0d0d0"/>
<path d="M525.5 27.4 L523.1 25.4 V26.599999999999998 H521.1 V28.2 H523.1 V29.4 Z" fill="#5c5c5c"/>
<rect x="529.50" y="23.00" width="17.4" height="8.8" rx="1.2" fill="#3d3d3d" stroke="#2b2b2b" stroke-width="0.5"/>
<path d="M532.1 24.799999999999997 V29.799999999999997 H537.3" fill="none" stroke="#b8c4cc" stroke-width="0.8"/>
<rect x="532.80" y="28.00" width="4.40" height="1.60" fill="#6f8a9a"/>
<rect x="531.50" y="24.40" width="1.30" height="1.30" fill="#9fd0f0"/>
<text x="539.20" y="29.00" font-size="4.8" fill="#d8d8d8" stroke="#d8d8d8" stroke-width="0.1" textLength="5.70" lengthAdjust="spacingAndGlyphs">obj</text>
<path d="M546.9 23.0 L548.6999999999999 27.4 L546.9 31.799999999999997" fill="none" stroke="#2b2b2b" stroke-width="0.5"/>
<circle cx="553.20" cy="26.60" r="1.90" fill="#3c6fd0"/>
<circle cx="556.60" cy="27.80" r="1.90" fill="#d83030"/>
<circle cx="554.50" cy="29.00" r="1.90" fill="#f0d020"/>
<path d="M552.0999999999999 24.9 H554.3 V28.1 H552.0999999999999 Z" fill="#e8e8f0" opacity="0.85"/>
<text x="559.60" y="29.10" font-size="4.8" fill="#dcdcdc" stroke="#dcdcdc" stroke-width="0.1" textLength="25.60" lengthAdjust="spacingAndGlyphs">SIM_Landslide</text>
<rect x="874.20" y="23.00" width="6.2" height="8.6" rx="0.6" fill="#262626" stroke="#1f1f1f" stroke-width="0.4"/>
<path d="M876.0 26.799999999999997 H878.5999999999999 L877.3 28.4 Z" fill="#9a9a9a"/>
<path d="M884.1999999999999 27.4 H886.4 M886.4 25.7 V29.099999999999998 L889.0 28.299999999999997 V26.5 Z" fill="#d8d8d8" stroke="#d8d8d8" stroke-width="0.5"/>
<circle cx="895.60" cy="27.40" r="2.70" fill="#2c3c54" stroke="#4f7fc0" stroke-width="0.8"/>
<line x1="895.60" y1="26.00" x2="895.60" y2="27.60" stroke="#4f7fc0" stroke-width="0.5"/>
<circle cx="486.60" cy="24.90" r="2.40" fill="#4a78c0" stroke="#c8d4e0" stroke-width="0.8"/>
<path d="M488.0 27.3 H489.6 L488.8 28.3 Z" fill="#c0c0c0"/>
<rect x="492.60" y="22.40" width="3.00" height="5.00" fill="#9aa6ae" rx="0.3"/>
<circle cx="496.40" cy="25.60" r="1.80" fill="#3c78d8"/>
<path d="M497.4 27.6 H498.8 L498.1 28.5 Z" fill="#c0c0c0"/>
<rect x="500.60" y="22.20" width="5.20" height="5.40" fill="#f0f0f0" rx="0.3"/>
<path d="M502.3 22.2 V27.6 M504.1 22.2 V27.6 M500.6 24.0 H505.8 M500.6 25.8 H505.8" fill="none" stroke="#a0a0a0" stroke-width="0.35"/>
</g>
<g id="viewbar">
<rect x="2.80" y="32.00" width="2.20" height="10.40" fill="#1f1f1f"/>
<path d="M3.2 33.4 L3.9 32.2 L4.6 33.4 Z" fill="#0a0a0a"/>
<rect x="7.50" y="33.60" width="0.90" height="0.90" fill="#e6e6e6"/>
<rect x="9.05" y="33.60" width="0.90" height="0.90" fill="#e6e6e6"/>
<rect x="10.60" y="33.60" width="0.90" height="0.90" fill="#e6e6e6"/>
<rect x="12.15" y="33.60" width="0.90" height="0.90" fill="#e6e6e6"/>
<rect x="7.50" y="35.15" width="0.90" height="0.90" fill="#e6e6e6"/>
<rect x="9.05" y="35.15" width="0.90" height="0.90" fill="#e6e6e6"/>
<rect x="10.60" y="35.15" width="0.90" height="0.90" fill="#e6e6e6"/>
<rect x="12.15" y="35.15" width="0.90" height="0.90" fill="#e6e6e6"/>
<rect x="7.50" y="36.70" width="0.90" height="0.90" fill="#e6e6e6"/>
<rect x="9.05" y="36.70" width="0.90" height="0.90" fill="#e6e6e6"/>
<rect x="10.60" y="36.70" width="0.90" height="0.90" fill="#e6e6e6"/>
<rect x="12.15" y="36.70" width="0.90" height="0.90" fill="#e6e6e6"/>
<rect x="7.50" y="38.25" width="0.90" height="0.90" fill="#e6e6e6"/>
<rect x="9.05" y="38.25" width="0.90" height="0.90" fill="#e6e6e6"/>
<rect x="10.60" y="38.25" width="0.90" height="0.90" fill="#e6e6e6"/>
<path d="M12.2 38.3 L13.4 39.5 L12.6 39.6 L12.4 40.4 Z" fill="#e6e6e6"/>
<path d="M214.0 36.6 L216.6 34.2 L217.2 36.2 L218.8 36.8 L216.4 38.4 Z" fill="#dfe6f0"/>
<circle cx="215.00" cy="38.20" r="1.00" fill="#3c7ad8"/>
<path d="M217.4 39.2 H218.8 L218.1 40.1 Z" fill="#b8b8b8"/>
<path d="M226.0 34.6 L229.8 38.6" fill="none" stroke="#e6e6e6" stroke-width="1.1"/>
<circle cx="229.60" cy="38.40" r="1.00" fill="#3c7ad8"/>
<path d="M229.8 39.4 H231.20000000000002 L230.5 40.3 Z" fill="#b8b8b8"/>
<path d="M236.2 34.8 H241.0 M236.2 38.8 H241.0 M238.6 34.8 V38.8" fill="none" stroke="#e6e6e6" stroke-width="0.8"/>
<circle cx="241.20" cy="36.80" r="0.90" fill="#3c7ad8"/>
<path d="M240.6 39.6 H242.0 L241.29999999999998 40.5 Z" fill="#b8b8b8"/>
<rect x="246.70" y="33.60" width="6.80" height="6.90" fill="#5a7ba6" rx="0.5"/>
<rect x="248.00" y="35.60" width="4.20" height="3.40" fill="#e8eef6"/>
<rect x="248.60" y="34.60" width="1.20" height="1.20" fill="#d8e2f0"/>
<rect x="250.60" y="34.40" width="1.20" height="1.40" fill="#d8e2f0"/>
<rect x="248.00" y="38.20" width="4.20" height="0.80" fill="#8aa8d0"/>
<rect x="257.00" y="35.20" width="4.20" height="3.00" fill="#f0f0f0" rx="0.3"/>
<rect x="258.60" y="38.20" width="1.00" height="0.90" fill="#c0c0c0"/>
<path d="M260.6 39.0 H262.0 L261.3 39.9 Z" fill="#b8b8b8"/>
<line x1="265.20" y1="33.40" x2="265.20" y2="40.60" stroke="#1c1c1c" stroke-width="0.6"/>
<line x1="244.40" y1="33.40" x2="244.40" y2="40.60" stroke="#1c1c1c" stroke-width="0.6"/>
<circle cx="270.30" cy="37.00" r="2.30" fill="#3a2626" stroke="#5a3434" stroke-width="0.6"/>
<path d="M269.2 35.9 L271.4 38.1 M271.4 35.9 L269.2 38.1" fill="none" stroke="#5a3434" stroke-width="0.6"/>
<line x1="276.60" y1="33.40" x2="276.60" y2="40.60" stroke="#1c1c1c" stroke-width="0.6"/>
<path d="M279.6 34.8 H284.4 V36.0 L283.4 39.6 H280.6 L279.6 36.0 Z" fill="#b9c2ca"/>
<circle cx="282.00" cy="37.00" r="1.10" fill="#4a5a68"/>
<rect x="280.20" y="34.20" width="3.60" height="0.90" fill="#e8e8e8"/>
<rect x="288.00" y="34.40" width="5.00" height="5.00" fill="#f2f2f2" rx="0.4"/>
<rect x="289.40" y="35.80" width="2.20" height="2.20" fill="#3a3a3a"/>
<path d="M494.0 34.2 V39.0 M496.6 35.4 V39.6" fill="none" stroke="#e6e6e6" stroke-width="0.7"/>
<circle cx="494.00" cy="34.60" r="0.80" fill="#3c86e8"/>
<circle cx="494.00" cy="38.60" r="0.80" fill="#3c86e8"/>
<circle cx="496.60" cy="36.00" r="0.80" fill="#3c86e8"/>
<path d="M496.6 40.2 H498.0 L497.3 41.1 Z" fill="#b8b8b8"/>
<circle cx="503.20" cy="36.80" r="2.50" fill="none" stroke="#e0e0e0" stroke-width="0.7"/>
<rect x="502.80" y="35.40" width="0.80" height="0.80" fill="#e0e0e0"/>
<rect x="502.80" y="36.60" width="0.80" height="1.60" fill="#e0e0e0"/>
</g>
<g id="netmenu">
<rect x="513.00" y="33.60" width="2.20" height="8.40" fill="#1f1f1f"/>
<path d="M513.4 35.0 L514.1 33.8 L514.8 35.0 Z" fill="#0a0a0a"/>
<text x="517.00" y="39.90" font-size="5.6" fill="#d6d6d6" stroke="#d6d6d6" stroke-width="0.04" textLength="7.40" lengthAdjust="spacingAndGlyphs">Add</text>
<text x="529.60" y="39.90" font-size="5.6" fill="#d6d6d6" stroke="#d6d6d6" stroke-width="0.04" textLength="7.60" lengthAdjust="spacingAndGlyphs">Edit</text>
<text x="542.20" y="39.90" font-size="5.6" fill="#d6d6d6" stroke="#d6d6d6" stroke-width="0.04" textLength="6.00" lengthAdjust="spacingAndGlyphs">Go</text>
<text x="552.60" y="39.90" font-size="5.6" fill="#d6d6d6" stroke="#d6d6d6" stroke-width="0.04" textLength="9.40" lengthAdjust="spacingAndGlyphs">View</text>
<text x="567.00" y="39.90" font-size="5.6" fill="#d6d6d6" stroke="#d6d6d6" stroke-width="0.04" textLength="10.20" lengthAdjust="spacingAndGlyphs">Tools</text>
<text x="582.00" y="39.90" font-size="5.6" fill="#d6d6d6" stroke="#d6d6d6" stroke-width="0.04" textLength="13.20" lengthAdjust="spacingAndGlyphs">Layout</text>
<text x="599.60" y="39.90" font-size="5.6" fill="#d6d6d6" stroke="#d6d6d6" stroke-width="0.04" textLength="8.80" lengthAdjust="spacingAndGlyphs">Labs</text>
<text x="612.60" y="39.90" font-size="5.6" fill="#d6d6d6" stroke="#d6d6d6" stroke-width="0.04" textLength="8.80" lengthAdjust="spacingAndGlyphs">Help</text>
<path d="M791.6 40.2 L796.0 35.8 M792.0 35.4 L796.2 40.2" fill="none" stroke="#ececec" stroke-width="1.0"/>
<circle cx="792.00" cy="35.60" r="1.00" fill="#ececec"/>
<path d="M800.4 35.0 V40.2 H803.6 M802.2 36.6 V40.2" fill="none" stroke="#dfe6ec" stroke-width="0.8"/>
<circle cx="800.40" cy="35.20" r="0.70" fill="#6ab0f0"/>
<rect x="807.40" y="35.00" width="5.40" height="5.40" fill="#f2f2f2" rx="0.3"/>
<path d="M810.1 35.0 V40.4 M807.4 37.7 H812.8" fill="none" stroke="#9a9a9a" stroke-width="0.45"/>
<rect x="822.20" y="35.00" width="5.60" height="5.40" fill="#e8e8e8" rx="0.3"/>
<rect x="822.80" y="35.60" width="1.40" height="1.30" fill="#d84040"/>
<rect x="824.40" y="35.60" width="1.40" height="1.30" fill="#e8c030"/>
<rect x="826.00" y="35.60" width="1.30" height="1.30" fill="#58a848"/>
<rect x="822.80" y="37.20" width="1.40" height="1.30" fill="#4878d8"/>
<rect x="824.40" y="37.20" width="1.40" height="1.30" fill="#a8c8e8"/>
<rect x="826.00" y="37.20" width="1.30" height="1.30" fill="#e89030"/>
<rect x="822.80" y="38.80" width="4.50" height="1.20" fill="#c8c8c8"/>
<rect x="830.80" y="35.00" width="5.40" height="5.40" fill="#8a8a8a" rx="0.3"/>
<path d="M833.5 35.0 V40.4 M830.8 37.7 H836.2" fill="none" stroke="#3a3a3a" stroke-width="0.6"/>
<rect x="845.20" y="35.00" width="5.20" height="5.20" fill="#f4f4f4" rx="0.3"/>
<path d="M846.8 35.0 V40.2 M846.8 36.8 H850.4 M846.8 38.6 H850.4" fill="none" stroke="#6a6a6a" stroke-width="0.45"/>
<path d="M853.6 35.0 H859.0 V38.6 L857.2 40.4 H853.6 Z" fill="#f2d63c"/>
<path d="M854.6 36.4 H858.0 M854.6 37.6 H857.0" fill="none" stroke="#8a7a20" stroke-width="0.4"/>
<rect x="861.80" y="35.00" width="5.40" height="5.20" fill="#4a8ad8" rx="0.3"/>
<path d="M861.8 39.2 L863.8 37.0 L865.2 38.4 L866.2 37.4 L867.2 38.6 V40.2 H861.8 Z" fill="#e8d060"/>
<circle cx="863.00" cy="36.20" r="0.60" fill="#f8f0a0"/>
<path d="M870.6 36.2 H876.2 V40.2 H870.6 Z" fill="#e89838"/>
<path d="M870.2 35.2 H876.6 V36.4 H870.2 Z" fill="#f0b058"/>
<line x1="873.40" y1="35.20" x2="873.40" y2="40.20" stroke="#b87020" stroke-width="0.4"/>
<circle cx="886.80" cy="37.00" r="1.90" fill="#dfe8f0" stroke="#f0f0f0" stroke-width="0.6"/>
<line x1="888.20" y1="38.40" x2="890.00" y2="40.40" stroke="#f0f0f0" stroke-width="0.9"/>
<rect x="893.60" y="34.80" width="5.60" height="5.60" fill="#f4f4f4" rx="0.4"/>
<path d="M895.2 36.4 H897.6 L896.4 38.6 Z" fill="#2a2a2a"/>
</g>
<g id="strips">
<rect x="5.40" y="43.30" width="8.20" height="1.30" fill="#4a4a4a"/>
<path d="M3.4 44.8 L4.3 43.4 L5.2 44.8 Z" fill="#0c0c0c"/>
<rect x="4.0" y="47.5" width="8.7" height="26.1" rx="0.6" fill="#414141" stroke="#2a2a2a" stroke-width="0.4"/>
<path d="M5.4 54.6 L8.4 50.2 L10.0 54.6 Z" fill="#f2d23c"/>
<path d="M8.2 50.4 L9.8 48.8 L10.8 50.2 L9.6 51.4 Z" fill="#d0d4d8"/>
<path d="M12.0 55.6 V54.2 L10.6 55.6 Z" fill="#c8c8c8"/>
<rect x="4.30" y="56.80" width="7.90" height="7.70" fill="#5a7ba6" rx="0.5"/>
<path d="M8.0 57.4 L10.4 60.0 L8.0 62.6 L5.6 60.0 Z" fill="#9aa8b8" stroke="#dfe6ee" stroke-width="0.45"/>
<circle cx="8.30" cy="62.30" r="1.05" fill="#f6dc50"/>
<path d="M11.8 64.0 V62.6 L10.4 64.0 Z" fill="#c8c8c8"/>
<path d="M8.2 66.6 L11.0 69.0 L8.6 72.2 L5.6 69.6 Z" fill="#f0d030"/>
<path d="M8.2 67.8 L9.8 69.2 L8.5 71.0 L6.8 69.5 Z" fill="#c8a418"/>
<path d="M12.0 72.8 V71.39999999999999 L10.6 72.8 Z" fill="#c8c8c8"/>
<path d="M6.0 79.4 V85.4 L7.4 84.0 L8.4 86.0 L9.2 85.6 L8.2 83.6 L10.0 83.4 Z" fill="#f0f0f0"/>
<path d="M12.2 86.6 V85.19999999999999 L10.799999999999999 86.6 Z" fill="#c8c8c8"/>
<rect x="3.70" y="88.60" width="8.20" height="7.60" fill="#5a7ba6" rx="0.5"/>
<rect x="6.00" y="91.80" width="3.80" height="3.20" fill="#f4f4f4" rx="0.4"/>
<path d="M6.8 91.8 V90.6 Q7.9 89.0 9.0 90.6 V91.8" fill="none" stroke="#f4f4f4" stroke-width="0.7"/>
<circle cx="8.00" cy="101.60" r="1.60" fill="#d8d8d8"/>
<path d="M5.2 104.4 L7.2 102.60000000000001 M10.8 104.4 L8.8 102.60000000000001" fill="none" stroke="#d83030" stroke-width="1.0"/>
<path d="M12.2 105.60000000000001 V104.2 L10.799999999999999 105.60000000000001 Z" fill="#c8c8c8"/>
<circle cx="8.00" cy="111.40" r="1.60" fill="#d8d8d8"/>
<path d="M5.4 113.0 Q8.0 115.6 10.6 113.0" fill="none" stroke="#e05020" stroke-width="1.1"/>
<path d="M12.2 115.4 V114.0 L10.799999999999999 115.4 Z" fill="#c8c8c8"/>
<circle cx="8.00" cy="121.00" r="1.60" fill="#d8d8d8"/>
<rect x="7.00" y="121.40" width="2.00" height="3.20" fill="#d03030"/>
<rect x="7.30" y="118.60" width="1.40" height="1.40" fill="#c0c0c0"/>
<path d="M12.2 125.0 V123.6 L10.799999999999999 125.0 Z" fill="#c8c8c8"/>
<path d="M6.0 134.6 L9.8 128.4 M6.2 129.0 L9.6 134.2" fill="none" stroke="#c8c8c8" stroke-width="0.8"/>
<circle cx="7.80" cy="131.40" r="0.80" fill="#d04040"/>
<path d="M12.2 135.6 V134.2 L10.799999999999999 135.6 Z" fill="#c8c8c8"/>
<path d="M5.6 144.2 L8.0 138.8 L10.4 144.2 Z" fill="#58b040"/>
<circle cx="7.80" cy="140.20" r="1.00" fill="#e0c030"/>
<circle cx="9.40" cy="143.20" r="0.90" fill="#d04030"/>
<path d="M12.4 145.8 V144.4 L11.0 145.8 Z" fill="#c8c8c8"/>
<path d="M5.8 155.6 V153.6 Q5.8 151.4 8.0 151.4 Q10.2 151.4 10.2 153.6 V155.6" fill="none" stroke="#d8383c" stroke-width="1.5"/>
<rect x="5.00" y="155.00" width="1.60" height="1.20" fill="#e8e8e8"/>
<rect x="9.40" y="155.00" width="1.60" height="1.20" fill="#e8e8e8"/>
<path d="M12.6 157.6 V156.2 L11.2 157.6 Z" fill="#c8c8c8"/>
<rect x="7.40" y="153.40" width="3.60" height="3.00" fill="none" stroke="#e0e0e0" stroke-width="0.5"/>
<path d="M5.8 165.2 V163.2 Q5.8 161.0 8.0 161.0 Q10.2 161.0 10.2 163.2 V165.2" fill="none" stroke="#d8383c" stroke-width="1.5"/>
<rect x="5.00" y="164.60" width="1.60" height="1.20" fill="#e8e8e8"/>
<rect x="9.40" y="164.60" width="1.60" height="1.20" fill="#e8e8e8"/>
<path d="M12.6 167.2 V165.79999999999998 L11.2 167.2 Z" fill="#c8c8c8"/>
<line x1="5.60" y1="166.20" x2="11.00" y2="162.60" stroke="#e0e0e0" stroke-width="0.6"/>
<path d="M5.8 175.0 V173.0 Q5.8 170.8 8.0 170.8 Q10.2 170.8 10.2 173.0 V175.0" fill="none" stroke="#d8383c" stroke-width="1.5"/>
<rect x="5.00" y="174.40" width="1.60" height="1.20" fill="#e8e8e8"/>
<rect x="9.40" y="174.40" width="1.60" height="1.20" fill="#e8e8e8"/>
<path d="M12.6 177.0 V175.6 L11.2 177.0 Z" fill="#c8c8c8"/>
<circle cx="9.80" cy="175.40" r="0.80" fill="#e0e0e0"/>
<path d="M5.8 185.2 V183.2 Q5.8 181.0 8.0 181.0 Q10.2 181.0 10.2 183.2 V185.2" fill="none" stroke="#d8383c" stroke-width="1.5"/>
<rect x="5.00" y="184.60" width="1.60" height="1.20" fill="#e8e8e8"/>
<rect x="9.40" y="184.60" width="1.60" height="1.20" fill="#e8e8e8"/>
<path d="M12.6 187.2 V185.79999999999998 L11.2 187.2 Z" fill="#c8c8c8"/>
<rect x="3.70" y="193.20" width="8.20" height="7.60" fill="#5a7ba6" rx="0.5"/>
<path d="M5.4 197.0 L7.6 194.8 V196.0 H10.4 V198.0 H7.6 V199.2 Z" fill="#2c3644"/>
<circle cx="9.40" cy="197.00" r="1.30" fill="#3a4656"/>
<circle cx="7.80" cy="206.40" r="2.50" fill="none" stroke="#e0e0e0" stroke-width="0.7"/>
<rect x="8.20" y="206.60" width="2.40" height="2.40" fill="#e04848"/>
<line x1="7.80" y1="204.40" x2="7.80" y2="206.60" stroke="#e0e0e0" stroke-width="0.5"/>
<path d="M12.4 209.8 V208.4 L11.0 209.8 Z" fill="#c8c8c8"/>
<path d="M5.2 217.0 Q7.8 221.0 10.6 217.0 Z" fill="#e8e8e8"/>
<line x1="7.80" y1="213.60" x2="7.80" y2="216.60" stroke="#d0d0d0" stroke-width="0.6"/>
<line x1="6.60" y1="214.80" x2="9.00" y2="214.80" stroke="#d0d0d0" stroke-width="0.5"/>
<path d="M12.4 220.6 V219.2 L11.0 220.6 Z" fill="#c8c8c8"/>
<path d="M5.2 471.8 L10.0 470.6 V474.6 L7.6 476.0 L5.2 474.4 Z" fill="#e8e8e8"/>
<rect x="6.60" y="472.60" width="2.40" height="1.60" fill="#d05040"/>
<path d="M10.4 476.4 L11.6 477.2 L10.4 478.0 Z" fill="#d0d0d0"/>
<ellipse cx="7.8" cy="483.2" rx="3.0" ry="2.3" fill="#cfcfcf"/>
<path d="M5.6 483.2 Q7.8 481.4 10.0 483.2" fill="none" stroke="#6a6a6a" stroke-width="0.5"/>
<path d="M11.0 486.0 L12.6 487.4 L11.2 487.6 Z" fill="#d0d0d0"/>
<path d="M500.4 44.4 H502.4 M503.0 44.4 H505.0" fill="none" stroke="#6a6a6a" stroke-width="0.7"/>
<path d="M505.6 43.8 L506.6 44.8 L505.6 45.2 Z" fill="#101010"/>
<ellipse cx="503.4" cy="51.8" rx="2.9" ry="1.6" fill="#aab4bc"/>
<circle cx="503.40" cy="51.80" r="0.80" fill="#4a5660"/>
<path d="M507.2 54.4 V53.0 L505.8 54.4 Z" fill="#c8c8c8"/>
<path d="M500.79999999999995 57.4 L504.2 57.0 Q506.4 59.4 505.59999999999997 62.0 L502.4 62.2 Z" fill="#5a9a5c"/>
<path d="M507.2 63.4 V62.0 L505.8 63.4 Z" fill="#c8c8c8"/>
<rect x="501.20" y="67.80" width="4.40" height="3.40" fill="#f0f0f0" rx="0.4"/>
<path d="M502.09999999999997 67.8 V66.4 Q503.4 64.6 504.7 66.4 V67.8" fill="none" stroke="#f0f0f0" stroke-width="0.8"/>
<circle cx="503.40" cy="76.00" r="1.70" fill="#b4b8bc"/>
<rect x="502.60" y="77.60" width="1.60" height="1.60" fill="#8a9096"/>
<circle cx="503.20" cy="85.20" r="2.60" fill="#dfe3e7"/>
<circle cx="502.40" cy="84.40" r="1.00" fill="#ffffff"/>
<path d="M507.4 88.2 V86.8 L506.0 88.2 Z" fill="#c8c8c8"/>
<rect x="499.30" y="90.20" width="8.00" height="7.60" fill="#5a7ba6" rx="0.5"/>
<circle cx="503.40" cy="93.00" r="1.70" fill="#f0d860"/>
<rect x="502.60" y="94.60" width="1.60" height="1.70" fill="#d8dce0"/>
<circle cx="503.40" cy="101.80" r="1.70" fill="#e8e0b0"/>
<rect x="502.60" y="103.40" width="1.60" height="1.70" fill="#d0d4d8"/>
<path d="M507.4 106.2 V104.8 L506.0 106.2 Z" fill="#c8c8c8"/>
<rect x="499.30" y="108.80" width="8.00" height="7.60" fill="#5a7ba6" rx="0.5"/>
<circle cx="503.40" cy="112.60" r="2.50" fill="#1c1c20"/>
<path d="M503.4 112.6 L501.59999999999997 110.8 A2.5 2.5 0 0 1 505.2 110.8 Z M503.4 112.6 L505.9 112.8 A2.5 2.5 0 0 1 504.0 115.0 Z M503.4 112.6 L502.79999999999995 115.0 A2.5 2.5 0 0 1 500.9 112.8 Z" fill="#e8e8ec"/>
<path d="M501.0 119.0 L505.0 122.0" fill="none" stroke="#d0d0d0" stroke-width="0.8"/>
<circle cx="505.00" cy="121.80" r="0.80" fill="#d0d0d0"/>
<path d="M507.2 123.6 V122.19999999999999 L505.8 123.6 Z" fill="#c8c8c8"/>
<path d="M500.79999999999995 131.0 L502.79999999999995 127.6 L505.79999999999995 129.4 V132.0 Z" fill="#e6e6e6"/>
<circle cx="502.60" cy="128.60" r="1.00" fill="#c0c8d0"/>
<path d="M507.4 133.2 V131.79999999999998 L506.0 133.2 Z" fill="#c8c8c8"/>
<rect x="502.80" y="139.20" width="1.30" height="1.30" fill="#e8e8e8"/>
<path d="M501.79999999999995 150.6 L505.0 147.6" fill="none" stroke="#e0e0e0" stroke-width="0.8"/>
<circle cx="501.80" cy="150.60" r="0.70" fill="#e0e0e0"/>
<path d="M501.59999999999997 158.8 L505.2 155.2" fill="none" stroke="#e0e0e0" stroke-width="0.7"/>
<circle cx="505.10" cy="155.40" r="0.70" fill="#f0f0f0"/>
<path d="M501.4 168.0 L504.59999999999997 164.8" fill="none" stroke="#e0e0e0" stroke-width="0.7"/>
<rect x="504.00" y="163.80" width="1.80" height="1.80" fill="none" stroke="#e0e0e0" stroke-width="0.5"/>
<path d="M500.79999999999995 175.4 L505.2 173.0 V178.0 Z" fill="#e4e4e4"/>
<line x1="505.80" y1="173.40" x2="505.80" y2="177.60" stroke="#b0b0b0" stroke-width="0.5"/>
<path d="M500.79999999999995 184.2 L504.79999999999995 181.6 V186.6 Z" fill="#e4e4e4"/>
<path d="M505.4 182.0 V186.4 M506.29999999999995 182.6 V185.8" fill="none" stroke="#c0c0c0" stroke-width="0.5"/>
<path d="M501.59999999999997 195.4 V190.6 H505.4" fill="none" stroke="#d8d8d8" stroke-width="0.7"/>
<path d="M502.4 192.2 H504.0 M502.4 193.4 H503.59999999999997" fill="none" stroke="#909090" stroke-width="0.4"/>
<rect x="499.30" y="198.10" width="8.00" height="7.40" fill="#5a7ba6" rx="0.5"/>
<path d="M501.0 203.6 L505.59999999999997 199.6" fill="none" stroke="#eef2f8" stroke-width="0.8"/>
<line x1="500.80" y1="204.40" x2="506.00" y2="204.40" stroke="#c8d4e4" stroke-width="0.5"/>
<rect x="499.30" y="206.90" width="8.00" height="7.40" fill="#5a7ba6" rx="0.5"/>
<rect x="501.20" y="208.60" width="4.40" height="4.20" fill="#dfe6f0" rx="0.3"/>
<path d="M501.59999999999997 212.4 L505.2 209.0" fill="none" stroke="#e04838" stroke-width="0.7"/>
<path d="M503.4 216.6 L505.79999999999995 219.0 L503.4 221.4 L501.0 219.0 Z" fill="#e8ecf0"/>
<path d="M503.4 219.0 L505.79999999999995 219.0 L503.4 221.4 L501.0 219.0 Z" fill="#5a9ae0"/>
<rect x="501.20" y="226.20" width="1.80" height="3.40" fill="#78c060"/>
<rect x="503.60" y="226.20" width="1.80" height="3.40" fill="#78c060"/>
<path d="M501.4 238.8 L503.4 236.8 L505.4 234.6 M503.4 236.8 L505.2 239.4" fill="none" stroke="#e4e4e4" stroke-width="0.7"/>
<rect x="501.50" y="243.80" width="3.80" height="3.80" fill="#e8e8e8" rx="0.3"/>
<rect x="502.50" y="244.80" width="1.80" height="1.80" fill="#8a8a8a"/>
<rect x="499.30" y="250.80" width="8.00" height="7.60" fill="#5a7ba6" rx="0.5"/>
<path d="M500.79999999999995 257.2 L501.59999999999997 253.0 H505.2 L506.0 257.2 Z" fill="#e8eef6"/>
<rect x="502.00" y="252.00" width="2.80" height="1.40" fill="#c8d4e4"/>
<line x1="501.40" y1="255.60" x2="505.40" y2="255.60" stroke="#5a7ba6" stroke-width="0.5"/>
<line x1="500.00" y1="261.20" x2="507.20" y2="261.20" stroke="#1e1e1e" stroke-width="0.6"/>
<rect x="499.30" y="263.80" width="8.00" height="7.60" fill="#5a7ba6" rx="0.5"/>
<circle cx="503.40" cy="266.80" r="1.80" fill="#e8eef6"/>
<rect x="502.60" y="268.40" width="1.60" height="1.50" fill="#c8d4e4"/>
<circle cx="503.40" cy="266.80" r="0.70" fill="#8aa4c8"/>
<line x1="500.00" y1="462.00" x2="507.20" y2="462.00" stroke="#2a2a2a" stroke-width="0.6"/>
<circle cx="503.40" cy="467.30" r="2.20" fill="#2a2a2a" stroke="#e0e0e0" stroke-width="0.6"/>
<text x="502.60" y="468.40" font-size="3.0" fill="#e0e0e0">2</text>
<rect x="499.50" y="472.50" width="7.60" height="7.40" fill="#5a7ba6" rx="0.5"/>
<rect x="501.10" y="474.00" width="2.00" height="2.00" fill="#f0cf4c"/>
<rect x="503.70" y="474.00" width="2.00" height="2.00" fill="#f0cf4c"/>
<rect x="501.10" y="476.50" width="2.00" height="2.00" fill="#f0cf4c"/>
<rect x="503.70" y="476.50" width="2.00" height="2.00" fill="#f0cf4c"/>
<rect x="500.90" y="482.20" width="4.80" height="4.80" fill="#f2f2f2" rx="0.3"/>
<circle cx="503.60" cy="484.40" r="1.30" fill="none" stroke="#1a1a1a" stroke-width="0.6"/>
<line x1="504.60" y1="485.40" x2="506.20" y2="487.20" stroke="#e0e0e0" stroke-width="0.8"/>
</g>
<g id="overlays">
<path d="M21.0 52.0 L23.6 51.0 L24.4 48.8 L25.4 51.0 L28.0 52.0 L25.4 53.0 L24.4 55.2 L23.6 53.0 Z" fill="#39424e"/>
<path d="M24.4 49.6 V54.4 M21.8 52.0 H27.2" fill="none" stroke="#7b8898" stroke-width="0.45"/>
<path d="M28.2 55.2 V53.800000000000004 L26.8 55.2 Z" fill="#c8c8c8"/>
<text x="32.00" y="53.40" font-size="5.0" fill="#ffffff" stroke="#ffffff" stroke-width="0.1" textLength="10.60" lengthAdjust="spacingAndGlyphs" font-weight="bold">View</text>
<rect x="447.20" y="43.90" width="18.20" height="7.70" rx="3.85" fill="#232323" stroke="#6e6e6e" stroke-width="0.55"/>
<text x="450.20" y="48.90" font-size="4.2" fill="#c6c6c6" textLength="9.60" lengthAdjust="spacingAndGlyphs">Persp</text>
<path d="M461.0 46.9 H463.0 L462.0 48.3 Z" fill="#d0d0d0"/>
<rect x="467.80" y="43.90" width="29.20" height="7.70" rx="3.85" fill="#232323" stroke="#6e6e6e" stroke-width="0.55"/>
<text x="470.80" y="48.90" font-size="4.2" fill="#c6c6c6" textLength="20.00" lengthAdjust="spacingAndGlyphs">RenderCam</text>
<path d="M492.6 46.9 H494.6 L493.6 48.3 Z" fill="#d0d0d0"/>
<rect x="83.40" y="480.40" width="347.80" height="7.40" fill="#060606"/>
<text x="85.00" y="485.80" font-size="3.95" fill="#f0f0f0" stroke="#f0f0f0" stroke-width="0.04" textLength="344.00" lengthAdjust="spacingAndGlyphs">Left mouse tumbles. Middle pans. Right dollies. Ctrl+Alt+Left box-zooms. Ctrl+Right zooms. Spacebar-Ctrl-Left tilts. Hold L for alternate tumble, dolly, and zoom. M or Alt+M for First Person Navigation.</text>
<rect x="474.20" y="473.60" width="23.60" height="15.00" fill="#0a0a0a"/>
<text x="475.60" y="482.50" font-size="7.7" fill="#e2e2e2" textLength="21.20" lengthAdjust="spacingAndGlyphs" font-weight="bold">1.2fps</text>
<text x="481.20" y="487.40" font-size="3.4" fill="#8a8a8a" stroke="#8a8a8a" stroke-width="0.1" textLength="15.40" lengthAdjust="spacingAndGlyphs">829.68ms</text>
<line x1="20.60" y1="484.00" x2="19.20" y2="485.40" stroke="#3c50c8" stroke-width="0.9"/>
<line x1="20.60" y1="484.00" x2="17.80" y2="484.20" stroke="#c83030" stroke-width="0.8"/>
<line x1="20.40" y1="484.20" x2="21.60" y2="478.60" stroke="#3ca03c" stroke-width="0.9"/>
<text x="21.20" y="478.40" font-size="2.6" fill="#3ca03c" stroke="#3ca03c" stroke-width="0.1">y</text>
</g>
<g id="playbar">
<rect x="5.20" y="492.2" width="9.00" height="9.4" rx="0.7" fill="#3c3c3c" stroke="#2a2a2a" stroke-width="0.4"/>
<rect x="6.60" y="494.60" width="0.90" height="4.60" fill="#f0f0f0"/>
<path d="M10.6 496.9 L13.0 494.8 V499.0 Z" fill="#f0f0f0"/>
<path d="M7.8 496.9 L10.4 494.8 V499.0 Z" fill="#f0f0f0"/>
<rect x="14.90" y="492.2" width="9.00" height="9.4" rx="0.7" fill="#3c3c3c" stroke="#2a2a2a" stroke-width="0.4"/>
<path d="M17.6 496.9 L21.0 494.4 V499.4 Z" fill="#f0f0f0"/>
<rect x="24.60" y="492.2" width="9.00" height="9.4" rx="0.7" fill="#5a7ba6" stroke="#2a2a2a" stroke-width="0.4"/>
<rect x="27.20" y="494.80" width="3.90" height="4.20" fill="#e8eef6"/>
<rect x="34.30" y="492.2" width="9.00" height="9.4" rx="0.7" fill="#3c3c3c" stroke="#2a2a2a" stroke-width="0.4"/>
<path d="M40.6 496.9 L37.0 494.4 V499.4 Z" fill="#f0f0f0"/>
<rect x="43.90" y="492.2" width="9.00" height="9.4" rx="0.7" fill="#3c3c3c" stroke="#2a2a2a" stroke-width="0.4"/>
<rect x="50.40" y="494.60" width="0.90" height="4.60" fill="#f0f0f0"/>
<path d="M47.4 496.9 L45.0 494.8 V499.0 Z" fill="#f0f0f0"/>
<path d="M50.2 496.9 L47.6 494.8 V499.0 Z" fill="#f0f0f0"/>
<rect x="54.20" y="492.20" width="16.20" height="9.60" fill="#151515" rx="0.5"/>
<text x="55.40" y="498.60" font-size="4.4" fill="#e0e0e0" stroke="#e0e0e0" stroke-width="0.1" textLength="4.60" lengthAdjust="spacingAndGlyphs">70</text>
<rect x="71.00" y="492.2" width="4.40" height="9.4" rx="0.7" fill="#3c3c3c" stroke="#2a2a2a" stroke-width="0.4"/>
<path d="M72.2 496.9 L73.8 495.6 V498.2 Z M73.9 496.9 L75.0 495.9 V497.9 Z" fill="#d0d0d0"/>
<rect x="76.00" y="492.2" width="4.40" height="9.4" rx="0.7" fill="#3c3c3c" stroke="#2a2a2a" stroke-width="0.4"/>
<path d="M79.6 496.9 L78.0 495.6 V498.2 Z M77.9 496.9 L76.8 495.9 V497.9 Z" fill="#d0d0d0"/>
<line x1="82.00" y1="497.70" x2="811.60" y2="497.70" stroke="#6a6a6a" stroke-width="0.5"/>
<path d="M82.60 496.50 V498.90 M85.52 496.50 V498.90 M88.43 496.50 V498.90 M91.35 496.50 V498.90 M94.27 496.50 V498.90 M97.18 496.50 V498.90 M100.10 496.50 V498.90 M103.02 496.50 V498.90 M105.93 496.50 V498.90 M108.85 496.50 V498.90 M111.77 496.50 V498.90 M114.68 496.50 V498.90 M117.60 496.50 V498.90 M120.52 496.50 V498.90 M123.43 496.50 V498.90 M126.35 496.50 V498.90 M129.27 496.50 V498.90 M132.18 496.50 V498.90 M135.10 496.50 V498.90 M138.02 496.50 V498.90 M140.93 496.50 V498.90 M143.85 496.50 V498.90 M146.77 496.50 V498.90 M149.68 495.30 V500.10 M152.60 496.50 V498.90 M155.52 496.50 V498.90 M158.43 496.50 V498.90 M161.35 496.50 V498.90 M164.27 496.50 V498.90 M167.18 496.50 V498.90 M170.10 496.50 V498.90 M173.02 496.50 V498.90 M175.93 496.50 V498.90 M178.85 496.50 V498.90 M181.77 496.50 V498.90 M184.68 496.50 V498.90 M187.60 496.50 V498.90 M190.52 496.50 V498.90 M193.43 496.50 V498.90 M196.35 496.50 V498.90 M199.27 496.50 V498.90 M202.18 496.50 V498.90 M205.10 496.50 V498.90 M208.02 496.50 V498.90 M210.93 496.50 V498.90 M213.85 496.50 V498.90 M216.77 496.50 V498.90 M219.68 495.30 V500.10 M222.60 496.50 V498.90 M225.52 496.50 V498.90 M228.44 496.50 V498.90 M231.35 496.50 V498.90 M234.27 496.50 V498.90 M237.19 496.50 V498.90 M240.10 496.50 V498.90 M243.02 496.50 V498.90 M245.94 496.50 V498.90 M248.85 496.50 V498.90 M251.77 496.50 V498.90 M254.69 496.50 V498.90 M257.60 496.50 V498.90 M260.52 496.50 V498.90 M263.44 496.50 V498.90 M266.35 496.50 V498.90 M269.27 496.50 V498.90 M272.19 496.50 V498.90 M275.10 496.50 V498.90 M278.02 496.50 V498.90 M280.94 496.50 V498.90 M283.85 496.50 V498.90 M286.77 496.50 V498.90 M289.69 495.30 V500.10 M292.60 496.50 V498.90 M295.52 496.50 V498.90 M298.44 496.50 V498.90 M301.35 496.50 V498.90 M304.27 496.50 V498.90 M307.19 496.50 V498.90 M310.10 496.50 V498.90 M313.02 496.50 V498.90 M315.94 496.50 V498.90 M318.85 496.50 V498.90 M321.77 496.50 V498.90 M324.69 496.50 V498.90 M327.60 496.50 V498.90 M330.52 496.50 V498.90 M333.44 496.50 V498.90 M336.35 496.50 V498.90 M339.27 496.50 V498.90 M342.19 496.50 V498.90 M345.10 496.50 V498.90 M348.02 496.50 V498.90 M350.94 496.50 V498.90 M353.85 496.50 V498.90 M356.77 496.50 V498.90 M359.69 495.30 V500.10 M362.60 496.50 V498.90 M365.52 496.50 V498.90 M368.44 496.50 V498.90 M371.35 496.50 V498.90 M374.27 496.50 V498.90 M377.19 496.50 V498.90 M380.10 496.50 V498.90 M383.02 496.50 V498.90 M385.94 496.50 V498.90 M388.85 496.50 V498.90 M391.77 496.50 V498.90 M394.69 496.50 V498.90 M397.60 496.50 V498.90 M400.52 496.50 V498.90 M403.44 496.50 V498.90 M406.35 496.50 V498.90 M409.27 496.50 V498.90 M412.19 496.50 V498.90 M415.10 496.50 V498.90 M418.02 496.50 V498.90 M420.94 496.50 V498.90 M423.85 496.50 V498.90 M426.77 496.50 V498.90 M429.69 495.30 V500.10 M432.60 496.50 V498.90 M435.52 496.50 V498.90 M438.44 496.50 V498.90 M441.35 496.50 V498.90 M444.27 496.50 V498.90 M447.19 496.50 V498.90 M450.10 496.50 V498.90 M453.02 496.50 V498.90 M455.94 496.50 V498.90 M458.85 496.50 V498.90 M461.77 496.50 V498.90 M464.69 496.50 V498.90 M467.60 496.50 V498.90 M470.52 496.50 V498.90 M473.44 496.50 V498.90 M476.35 496.50 V498.90 M479.27 496.50 V498.90 M482.19 496.50 V498.90 M485.10 496.50 V498.90 M488.02 496.50 V498.90 M490.94 496.50 V498.90 M493.85 496.50 V498.90 M496.77 496.50 V498.90 M499.69 495.30 V500.10 M502.60 496.50 V498.90 M505.52 496.50 V498.90 M508.44 496.50 V498.90 M511.35 496.50 V498.90 M514.27 496.50 V498.90 M517.19 496.50 V498.90 M520.11 496.50 V498.90 M523.02 496.50 V498.90 M525.94 496.50 V498.90 M528.86 496.50 V498.90 M531.77 496.50 V498.90 M534.69 496.50 V498.90 M537.61 496.50 V498.90 M540.52 496.50 V498.90 M543.44 496.50 V498.90 M546.36 496.50 V498.90 M549.27 496.50 V498.90 M552.19 496.50 V498.90 M555.11 496.50 V498.90 M558.02 496.50 V498.90 M560.94 496.50 V498.90 M563.86 496.50 V498.90 M566.77 496.50 V498.90 M569.69 495.30 V500.10 M572.61 496.50 V498.90 M575.52 496.50 V498.90 M578.44 496.50 V498.90 M581.36 496.50 V498.90 M584.27 496.50 V498.90 M587.19 496.50 V498.90 M590.11 496.50 V498.90 M593.02 496.50 V498.90 M595.94 496.50 V498.90 M598.86 496.50 V498.90 M601.77 496.50 V498.90 M604.69 496.50 V498.90 M607.61 496.50 V498.90 M610.52 496.50 V498.90 M613.44 496.50 V498.90 M616.36 496.50 V498.90 M619.27 496.50 V498.90 M622.19 496.50 V498.90 M625.11 496.50 V498.90 M628.02 496.50 V498.90 M630.94 496.50 V498.90 M633.86 496.50 V498.90 M636.77 496.50 V498.90 M639.69 495.30 V500.10 M642.61 496.50 V498.90 M645.52 496.50 V498.90 M648.44 496.50 V498.90 M651.36 496.50 V498.90 M654.27 496.50 V498.90 M657.19 496.50 V498.90 M660.11 496.50 V498.90 M663.02 496.50 V498.90 M665.94 496.50 V498.90 M668.86 496.50 V498.90 M671.77 496.50 V498.90 M674.69 496.50 V498.90 M677.61 496.50 V498.90 M680.52 496.50 V498.90 M683.44 496.50 V498.90 M686.36 496.50 V498.90 M689.27 496.50 V498.90 M692.19 496.50 V498.90 M695.11 496.50 V498.90 M698.02 496.50 V498.90 M700.94 496.50 V498.90 M703.86 496.50 V498.90 M706.77 496.50 V498.90 M709.69 495.30 V500.10 M712.61 496.50 V498.90 M715.52 496.50 V498.90 M718.44 496.50 V498.90 M721.36 496.50 V498.90 M724.27 496.50 V498.90 M727.19 496.50 V498.90 M730.11 496.50 V498.90 M733.02 496.50 V498.90 M735.94 496.50 V498.90 M738.86 496.50 V498.90 M741.77 496.50 V498.90 M744.69 496.50 V498.90 M747.61 496.50 V498.90 M750.52 496.50 V498.90 M753.44 496.50 V498.90 M756.36 496.50 V498.90 M759.27 496.50 V498.90 M762.19 496.50 V498.90 M765.11 496.50 V498.90 M768.02 496.50 V498.90 M770.94 496.50 V498.90 M773.86 496.50 V498.90 M776.77 496.50 V498.90 M779.69 495.30 V500.10 M782.61 496.50 V498.90 M785.52 496.50 V498.90 M788.44 496.50 V498.90 M791.36 496.50 V498.90 M794.27 496.50 V498.90 M797.19 496.50 V498.90 M800.11 496.50 V498.90 M803.02 496.50 V498.90 M805.94 496.50 V498.90 M808.86 496.50 V498.90 M811.78 496.50 V498.90" fill="none" stroke="#a6a6a6" stroke-width="0.55"/>
<text x="83.70" y="493.40" font-size="3.3" fill="#909090">1</text>
<text x="150.78" y="493.40" font-size="3.3" fill="#909090">24</text>
<text x="220.78" y="493.40" font-size="3.3" fill="#909090">48</text>
<text x="290.79" y="493.40" font-size="3.3" fill="#909090">72</text>
<text x="360.79" y="493.40" font-size="3.3" fill="#909090">96</text>
<text x="430.79" y="493.40" font-size="3.3" fill="#909090">120</text>
<text x="500.79" y="493.40" font-size="3.3" fill="#909090">144</text>
<text x="570.79" y="493.40" font-size="3.3" fill="#909090">168</text>
<text x="640.79" y="493.40" font-size="3.3" fill="#909090">192</text>
<text x="710.79" y="493.40" font-size="3.3" fill="#909090">216</text>
<text x="780.79" y="493.40" font-size="3.3" fill="#909090">240</text>
<path d="M280.5523 489.9 H287.1523 Q288.3523 489.9 288.3523 491.1 V495.3 Q288.3523 496.5 287.1523 496.5 H285.3523 L283.8523 498.3 L282.3523 496.5 H280.5523 Q279.3523 496.5 279.3523 495.3 V491.1 Q279.3523 489.9 280.5523 489.9 Z" fill="#161616" stroke="#ededed" stroke-width="0.7"/>
<text x="281.55" y="494.90" font-size="4.0" fill="#ffffff" stroke="#ffffff" stroke-width="0.1" textLength="4.60" lengthAdjust="spacingAndGlyphs" font-weight="bold">70</text>
<circle cx="820.00" cy="500.60" r="6.00" fill="#3d3d3d" stroke="#2c2c2c" stroke-width="0.5"/>
<circle cx="821.40" cy="499.20" r="1.40" fill="none" stroke="#7a7a7a" stroke-width="0.7"/>
<line x1="820.40" y1="500.20" x2="818.00" y2="502.80" stroke="#7a7a7a" stroke-width="0.8"/>
<rect x="826.0" y="497.4" width="6.2" height="6.0" rx="0.5" fill="#2c2c2c"/>
<path d="M827.6 499.6 H830.6 L829.1 501.6 Z" fill="#c0c0c0"/>
<rect x="834.4" y="492.4" width="7.8" height="8.2" rx="0.5" fill="#1e1e1e" stroke="#4a4a4a" stroke-width="0.3"/>
<circle cx="838.40" cy="496.00" r="1.70" fill="none" stroke="#e4e4e4" stroke-width="0.8"/>
<path d="M836.0 494.0 h1.0 M836.0 495.6 h0.8 M836.0 497.2 h1.0" fill="none" stroke="#d0a040" stroke-width="0.5"/>
<line x1="839.60" y1="497.40" x2="841.00" y2="499.20" stroke="#e4e4e4" stroke-width="0.8"/>
<rect x="845.2" y="492.4" width="53.0" height="8.3" rx="0.8" fill="#464646" stroke="#262626" stroke-width="0.5"/>
<text x="850.60" y="498.30" font-size="4.3" fill="#e6e6e6" stroke="#e6e6e6" stroke-width="0.05" textLength="34.80" lengthAdjust="spacingAndGlyphs">0 keys, 0/0 channels</text>
<path d="M893.8 498.0 H896.4 L895.1 496.0 Z" fill="#d6d6d6"/>
<rect x="5.20" y="503.40" width="18.00" height="3.00" fill="#3c3c3c"/>
<rect x="24.60" y="503.40" width="9.00" height="3.00" fill="#5a7ba6"/>
<rect x="34.30" y="503.40" width="18.60" height="3.00" fill="#3c3c3c"/>
<rect x="54.20" y="503.60" width="16.20" height="3.00" fill="#151515"/>
<rect x="82.60" y="503.60" width="30.00" height="3.00" fill="#474747"/>
<rect x="570.00" y="503.60" width="60.00" height="3.00" fill="#262626"/>
<rect x="834.4" y="502.8" width="7.8" height="6" rx="0.5" fill="#101418" stroke="#4a4a4a" stroke-width="0.3"/>
<rect x="838.40" y="503.60" width="2.60" height="2.60" fill="#c86a28"/>
<rect x="845.2" y="503.0" width="53.0" height="6.0" rx="0.8" fill="#464646" stroke="#262626" stroke-width="0.5"/>
<text x="851.60" y="508.60" font-size="4.3" fill="#e6e6e6" stroke="#e6e6e6" stroke-width="0.05" textLength="30.00" lengthAdjust="spacingAndGlyphs">Key All Channels</text>
</g>
</g>
</svg>
</body>
</html>
